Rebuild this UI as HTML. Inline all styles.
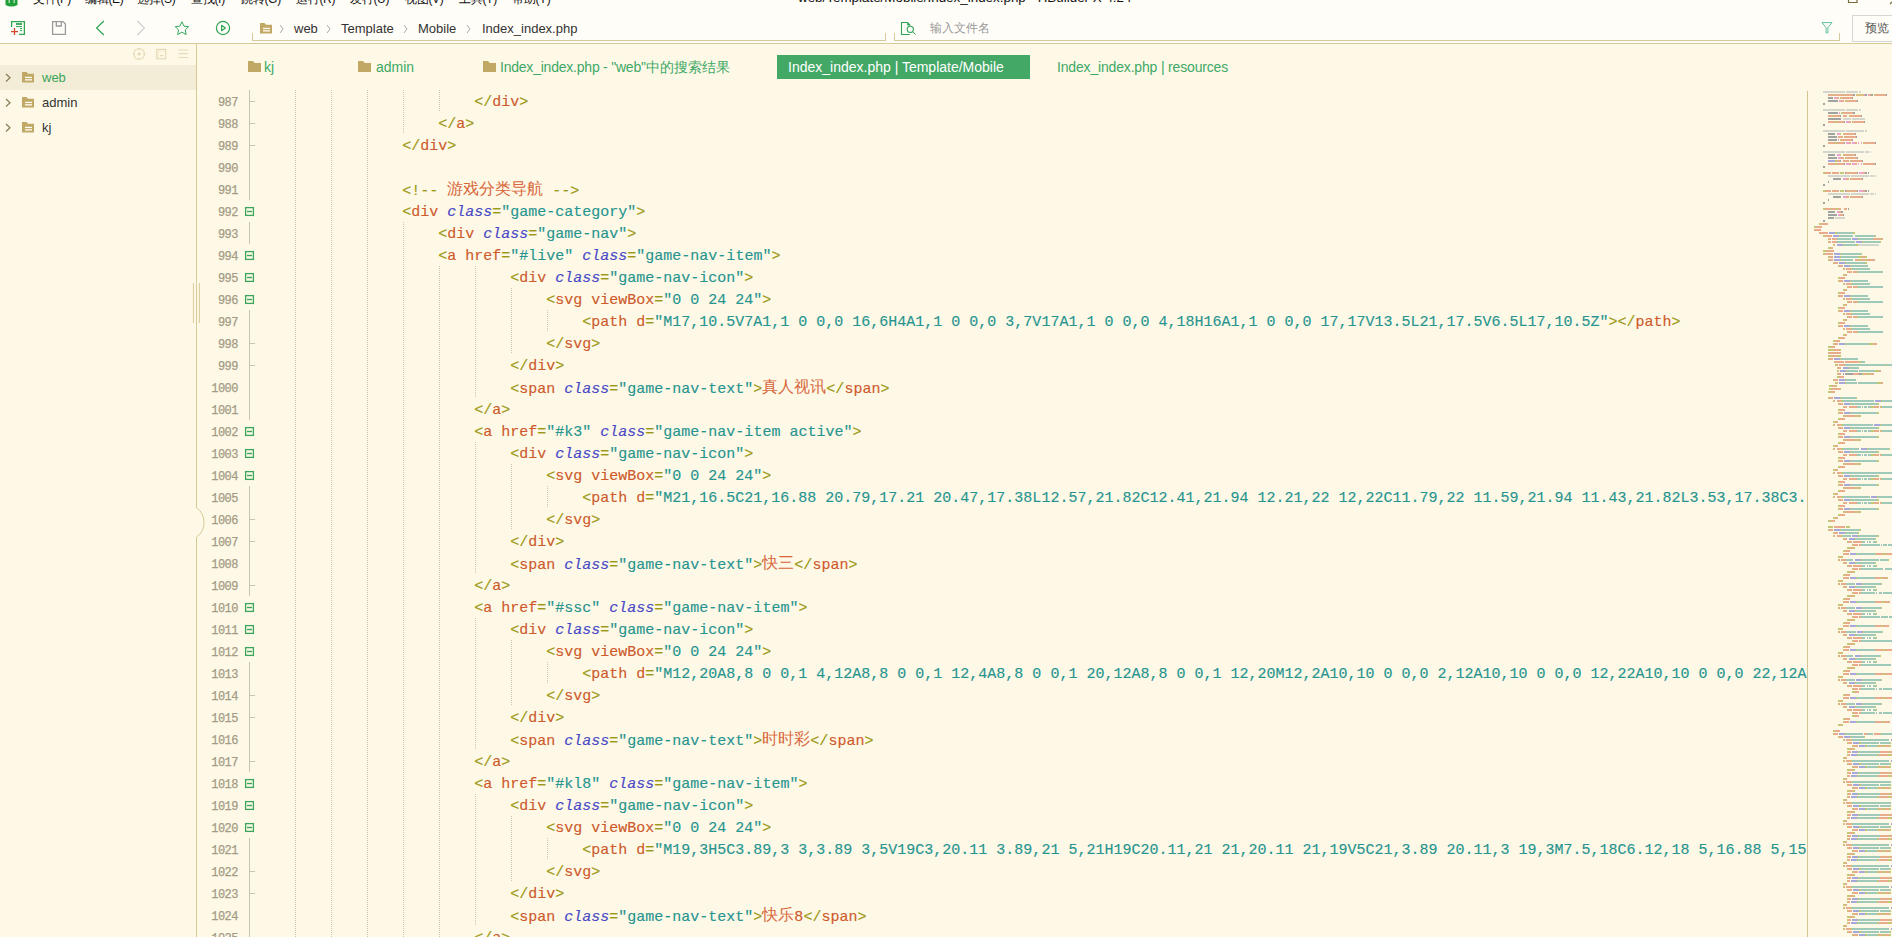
<!DOCTYPE html>
<html><head><meta charset="utf-8"><style>
*{margin:0;padding:0;box-sizing:border-box}
html,body{width:1892px;height:937px;overflow:hidden;background:#FEF9E7;font-family:"Liberation Sans",sans-serif}
.a{position:absolute}
#top{left:0;top:0;width:1892px;height:43px;background:#FFFDF8}
#hb{left:0;top:43px;width:1892px;height:1px;background:#D8C999}
.menu{top:-9px;font-size:12px;letter-spacing:-0.3px;color:#111;white-space:pre;line-height:16px}
.bc{top:20px;font-size:13px;color:#333;white-space:pre;line-height:18px}
.bcs{top:19px;font-size:12px;color:#999;line-height:18px}
#side{left:0;top:44px;width:196px;height:893px;background:#FEF9E7}
#sideb{left:196px;top:44px;width:1px;height:893px;background:#D8C999}
.tree{left:0;width:196px;height:25px}
.tree .t{left:42px;top:3px;font-size:13px;line-height:18px;color:#333;white-space:pre}
.tab{top:58px;font-size:14px;line-height:18px;color:#3FA866;white-space:pre}
.ln{left:200px;width:38px;text-align:right;font-family:"Liberation Mono",monospace;font-size:12px;letter-spacing:-0.5px;padding-top:1.5px;-webkit-text-stroke:0.25px;line-height:22px;color:#A39B84;height:22px}
.code{left:295px;font-family:"Liberation Mono",monospace;font-size:15px;line-height:22px;height:22px;padding-top:2px;white-space:pre;color:#CE5A2C;-webkit-text-stroke:0.15px}
.p{color:#9C9814} .g{color:#CE5A2C} .at{color:#CE5A2C} .c{color:#4848C6;font-style:italic} .s{color:#27948F}
.cj{font-size:15.5px;-webkit-text-stroke:0;color:#D8663A;position:relative;top:-1px}
#clip{left:197px;top:90px;width:1610px;height:847px;overflow:hidden}
#mm{left:1807px;top:90px;width:85px;height:847px;overflow:hidden}
</style></head>
<body>
<div id="top" class="a"></div>
<div id="hb" class="a"></div>
<svg class="a" style="left:4px;top:0" width="16" height="8"><path d="M1.5 0 H13.5 V5 Q7.5 8 1.5 5 Z" fill="#21A03A"/><rect x="4.5" y="0" width="1.5" height="3" fill="#fff" opacity=".6"/><rect x="9.5" y="0" width="1.5" height="3" fill="#fff" opacity=".6"/></svg>
<div class="a menu" style="left:33px">文件(F)</div>
<div class="a menu" style="left:85px">编辑(E)</div>
<div class="a menu" style="left:137px">选择(S)</div>
<div class="a menu" style="left:191px">查找(I)</div>
<div class="a menu" style="left:241px">跳转(G)</div>
<div class="a menu" style="left:296px">运行(R)</div>
<div class="a menu" style="left:350px">发行(U)</div>
<div class="a menu" style="left:405px">视图(V)</div>
<div class="a menu" style="left:459px">工具(T)</div>
<div class="a menu" style="left:512px">帮助(Y)</div>
<div class="a menu" style="left:798px;font-size:13.4px;letter-spacing:0;top:-10px">web/Template/Mobile/Index_index.php - HBuilder X 4.24</div>
<svg class="a" style="left:1846px;top:-1px" width="46" height="6"><path d="M2.5 0 V3.5 H11 V0" fill="none" stroke="#7a6a40" stroke-width="1.2"/><path d="M44 5 L46 3" stroke="#7a6a40" stroke-width="1.2"/></svg>
<svg class="a" style="left:0;top:12px" width="240" height="30" viewBox="0 12 240 30">
<g fill="none" stroke-width="1.3">
 <path d="M11.6 27 V21.6 H24.4 V34.4 H19" stroke="#2EA454"/>
 <path d="M16 24 H22" stroke="#2EA454" stroke-width="1.8"/>
 <path d="M16 26.6 H22" stroke="#2EA454" stroke-width="1"/>
 <path d="M20 28.6 H22 M20 30.6 H22" stroke="#2EA454" stroke-width="1"/>
 <path d="M11 31.6 H18 M14.5 28 V35" stroke="#D9452B" stroke-width="1.3"/>
 <path d="M52.6 21.6 H63 L65.4 24 V34.4 H52.6 Z" stroke="#9a9a9a"/>
 <path d="M56.3 21.6 V26 H61.3 V21.6" stroke="#9a9a9a"/>
 <path d="M103.8 21 L96.6 28 L103.8 35" stroke="#2EA454" stroke-width="1.2"/>
 <path d="M137.2 21 L144.4 28 L137.2 35" stroke="#cfcfcf" stroke-width="1.2"/>
 <path d="M181.9 21.8 L184 26.2 L188.6 26.7 L185.2 29.9 L186.2 34.6 L181.9 32.2 L177.6 34.6 L178.6 29.9 L175.2 26.7 L179.8 26.2 Z" stroke="#34AA5C" stroke-width="1" stroke-linejoin="round"/>
 <circle cx="223" cy="28" r="6.6" stroke="#2EA454" stroke-width="1.2"/>
 <path d="M221.6 25.3 L225.4 28 L221.6 30.7 Z" stroke="#2EA454" stroke-width="1.2" stroke-linejoin="round"/>
</g></svg>
<div class="a" style="left:252px;top:33px;width:1px;height:8px;background:#D8C999"></div>
<div class="a" style="left:252px;top:40px;width:634px;height:1px;background:#D8C999"></div>
<div class="a" style="left:885px;top:33px;width:1px;height:8px;background:#D8C999"></div>
<div class="a" style="left:894px;top:33px;width:1px;height:8px;background:#D8C999"></div>
<div class="a" style="left:894px;top:40px;width:946px;height:1px;background:#D8C999"></div>
<div class="a" style="left:1839px;top:33px;width:1px;height:8px;background:#D8C999"></div>
<svg class="a" style="left:260px;top:23px" width="13" height="11"><path d="M0 0 H4.5 L6 1.8 H12 V10.5 H0 Z" fill="#C2A865"/><rect x="3" y="4.8" width="7" height="1.3" fill="#fffdf5"/><rect x="3" y="7.2" width="7" height="1.3" fill="#fffdf5"/></svg>
<svg class="a" style="left:279px;top:24px" width="6" height="10"><path d="M1 1 L4 5.0 L1 9" fill="none" stroke="#aaa" stroke-width="1"/></svg>
<svg class="a" style="left:326px;top:24px" width="6" height="10"><path d="M1 1 L4 5.0 L1 9" fill="none" stroke="#aaa" stroke-width="1"/></svg>
<svg class="a" style="left:403px;top:24px" width="6" height="10"><path d="M1 1 L4 5.0 L1 9" fill="none" stroke="#aaa" stroke-width="1"/></svg>
<svg class="a" style="left:466px;top:24px" width="6" height="10"><path d="M1 1 L4 5.0 L1 9" fill="none" stroke="#aaa" stroke-width="1"/></svg>
<div class="a bc" style="left:294px">web</div>
<div class="a bc" style="left:341px">Template</div>
<div class="a bc" style="left:418px">Mobile</div>
<div class="a bc" style="left:482px">Index_index.php</div>
<svg class="a" style="left:895px;top:18px" width="26" height="20"><g fill="none" stroke="#2EA454" stroke-width="1.1">
<path d="M14.8 16.5 H6.5 V4.5 H12.5 L15.2 7.1"/><circle cx="15.3" cy="11.3" r="3.1"/><path d="M17.4 13.6 L20.5 16.5" stroke-width="1"/></g>
<path d="M12.2 4.6 L15.6 7.4 H12.2 Z" fill="#2EA454"/></svg>
<div class="a bcs" style="left:930px;color:#9a9a9a">输入文件名</div>
<svg class="a" style="left:1820px;top:21px" width="14" height="14"><path d="M2 1.6 H12 L7.9 6.6 V11.8 L6.1 11.8 V6.6 Z" fill="none" stroke="#4DB89A" stroke-width="0.9" stroke-linejoin="round"/></svg>
<div class="a" style="left:1852px;top:15px;width:50px;height:27px;border:1px solid #d6d6d6;background:#fffdf8"></div>
<div class="a" style="left:1865px;top:19px;font-size:12px;line-height:18px;color:#555">预览</div>
<div id="side" class="a"></div>
<div id="sideb" class="a"></div>
<svg class="a" style="left:130px;top:46px" width="66" height="16"><g fill="none" stroke="#E6DBB8" stroke-width="1.2">
<circle cx="9.1" cy="8" r="5.4"/><path d="M9.1 2.6 V4.2 M9.1 11.8 V13.4 M3.7 8 H5.3 M12.9 8 H14.5"/>
<rect x="26.7" y="3.4" width="9" height="9.4"/><path d="M28.3 12.2 V5 H35" stroke-width="0.8" opacity=".6"/><path d="M30 9.6 H33.4"/>
<path d="M48.5 4 H57.8 M48.5 7.7 H57.8 M48.5 11.5 H57.8"/></g><circle cx="9.1" cy="8" r="1.7" fill="#E6DBB8"/></svg>
<div class="a" style="left:0;top:65px;width:196px;height:25px;background:#F3ECD6"></div>
<svg class="a" style="left:5px;top:73px" width="7" height="9.5"><path d="M1 1 L5 4.75 L1 8.5" fill="none" stroke="#8C7F5C" stroke-width="1.3"/></svg>
<svg class="a" style="left:22px;top:72px" width="13" height="11"><path d="M0 0 H4.5 L6 1.8 H12 V10.5 H0 Z" fill="#C2A865"/><rect x="3" y="4.8" width="7" height="1.3" fill="#fffdf5"/><rect x="3" y="7.2" width="7" height="1.3" fill="#fffdf5"/></svg>
<div class="a" style="left:42px;top:69px;font-size:13px;line-height:18px;color:#3BA55C">web</div>
<svg class="a" style="left:5px;top:98px" width="7" height="9.5"><path d="M1 1 L5 4.75 L1 8.5" fill="none" stroke="#8C7F5C" stroke-width="1.3"/></svg>
<svg class="a" style="left:22px;top:97px" width="13" height="11"><path d="M0 0 H4.5 L6 1.8 H12 V10.5 H0 Z" fill="#C2A865"/><rect x="3" y="4.8" width="7" height="1.3" fill="#fffdf5"/><rect x="3" y="7.2" width="7" height="1.3" fill="#fffdf5"/></svg>
<div class="a" style="left:42px;top:94px;font-size:13px;line-height:18px;color:#333">admin</div>
<svg class="a" style="left:5px;top:123px" width="7" height="9.5"><path d="M1 1 L5 4.75 L1 8.5" fill="none" stroke="#8C7F5C" stroke-width="1.3"/></svg>
<svg class="a" style="left:22px;top:122px" width="13" height="11"><path d="M0 0 H4.5 L6 1.8 H12 V10.5 H0 Z" fill="#C2A865"/><rect x="3" y="4.8" width="7" height="1.3" fill="#fffdf5"/><rect x="3" y="7.2" width="7" height="1.3" fill="#fffdf5"/></svg>
<div class="a" style="left:42px;top:119px;font-size:13px;line-height:18px;color:#333">kj</div>
<svg class="a" style="left:190px;top:270px" width="20" height="280">
<path d="M3.4 13 V53" stroke="#D8C999" stroke-width="1"/><path d="M9.4 13 V53" stroke="#D8C999" stroke-width="1"/>
<rect x="5.5" y="238" width="3" height="29" fill="#FEF9E7"/><path d="M6.5 237.5 Q14 243 14 252.5 Q14 262 6.5 267" fill="none" stroke="#D8C999" stroke-width="1"/></svg>
<svg class="a" style="left:248px;top:61px" width="14" height="12"><path d="M0 0 H5 L6.8 2 H13 V11 H0 Z" fill="#C2A865"/></svg>
<div class="a tab" style="left:264px">kj</div>
<svg class="a" style="left:358px;top:61px" width="14" height="12"><path d="M0 0 H5 L6.8 2 H13 V11 H0 Z" fill="#C2A865"/></svg>
<div class="a tab" style="left:376px">admin</div>
<svg class="a" style="left:483px;top:61px" width="14" height="12"><path d="M0 0 H5 L6.8 2 H13 V11 H0 Z" fill="#C2A865"/></svg>
<div class="a tab" style="left:500px"><span style="letter-spacing:-0.22px">Index_index.php - "web"</span>中的搜索结果</div>
<div class="a" style="left:777px;top:55px;width:253px;height:24px;background:#43A866"></div>
<div class="a tab" style="left:788px;color:#fff">Index_index.php | Template/Mobile</div>
<div class="a tab" style="left:1057px;letter-spacing:-0.17px">Index_index.php | resources</div>
<div id="clip" class="a">
<div class="a" style="left:98px;top:0px;width:1px;height:22px;background:repeating-linear-gradient(to bottom,#CFC6AE 0 1px,transparent 1px 2px)"></div>
<div class="a" style="left:134px;top:0px;width:1px;height:22px;background:repeating-linear-gradient(to bottom,#CFC6AE 0 1px,transparent 1px 2px)"></div>
<div class="a" style="left:170px;top:0px;width:1px;height:22px;background:repeating-linear-gradient(to bottom,#CFC6AE 0 1px,transparent 1px 2px)"></div>
<div class="a" style="left:206px;top:0px;width:1px;height:22px;background:repeating-linear-gradient(to bottom,#CFC6AE 0 1px,transparent 1px 2px)"></div>
<div class="a" style="left:242px;top:0px;width:1px;height:22px;background:repeating-linear-gradient(to bottom,#CFC6AE 0 1px,transparent 1px 2px)"></div>
<div class="a code" style="left:97.19999999999999px;top:0px">                    <span class="p">&lt;/</span><span class="g">div</span><span class="p">&gt;</span></div>
<div class="a" style="left:98px;top:22px;width:1px;height:22px;background:repeating-linear-gradient(to bottom,#CFC6AE 0 1px,transparent 1px 2px)"></div>
<div class="a" style="left:134px;top:22px;width:1px;height:22px;background:repeating-linear-gradient(to bottom,#CFC6AE 0 1px,transparent 1px 2px)"></div>
<div class="a" style="left:170px;top:22px;width:1px;height:22px;background:repeating-linear-gradient(to bottom,#CFC6AE 0 1px,transparent 1px 2px)"></div>
<div class="a" style="left:206px;top:22px;width:1px;height:22px;background:repeating-linear-gradient(to bottom,#CFC6AE 0 1px,transparent 1px 2px)"></div>
<div class="a code" style="left:97.19999999999999px;top:22px">                <span class="p">&lt;/</span><span class="g">a</span><span class="p">&gt;</span></div>
<div class="a" style="left:98px;top:44px;width:1px;height:22px;background:repeating-linear-gradient(to bottom,#CFC6AE 0 1px,transparent 1px 2px)"></div>
<div class="a" style="left:134px;top:44px;width:1px;height:22px;background:repeating-linear-gradient(to bottom,#CFC6AE 0 1px,transparent 1px 2px)"></div>
<div class="a" style="left:170px;top:44px;width:1px;height:22px;background:repeating-linear-gradient(to bottom,#CFC6AE 0 1px,transparent 1px 2px)"></div>
<div class="a code" style="left:97.19999999999999px;top:44px">            <span class="p">&lt;/</span><span class="g">div</span><span class="p">&gt;</span></div>
<div class="a" style="left:98px;top:66px;width:1px;height:22px;background:repeating-linear-gradient(to bottom,#CFC6AE 0 1px,transparent 1px 2px)"></div>
<div class="a" style="left:134px;top:66px;width:1px;height:22px;background:repeating-linear-gradient(to bottom,#CFC6AE 0 1px,transparent 1px 2px)"></div>
<div class="a" style="left:170px;top:66px;width:1px;height:22px;background:repeating-linear-gradient(to bottom,#CFC6AE 0 1px,transparent 1px 2px)"></div>
<div class="a code" style="left:97.19999999999999px;top:66px"></div>
<div class="a" style="left:98px;top:88px;width:1px;height:22px;background:repeating-linear-gradient(to bottom,#CFC6AE 0 1px,transparent 1px 2px)"></div>
<div class="a" style="left:134px;top:88px;width:1px;height:22px;background:repeating-linear-gradient(to bottom,#CFC6AE 0 1px,transparent 1px 2px)"></div>
<div class="a" style="left:170px;top:88px;width:1px;height:22px;background:repeating-linear-gradient(to bottom,#CFC6AE 0 1px,transparent 1px 2px)"></div>
<div class="a code" style="left:97.19999999999999px;top:88px">            <span class="p">&lt;!--</span><span class="g"> <span class="cj">游戏分类导航</span> </span><span class="p">--&gt;</span></div>
<div class="a" style="left:98px;top:110px;width:1px;height:22px;background:repeating-linear-gradient(to bottom,#CFC6AE 0 1px,transparent 1px 2px)"></div>
<div class="a" style="left:134px;top:110px;width:1px;height:22px;background:repeating-linear-gradient(to bottom,#CFC6AE 0 1px,transparent 1px 2px)"></div>
<div class="a" style="left:170px;top:110px;width:1px;height:22px;background:repeating-linear-gradient(to bottom,#CFC6AE 0 1px,transparent 1px 2px)"></div>
<div class="a code" style="left:97.19999999999999px;top:110px">            <span class="p">&lt;</span><span class="g">div</span> <span class="c">class</span><span class="p">=</span><span class="s">"game-category"</span><span class="p">&gt;</span></div>
<div class="a" style="left:98px;top:132px;width:1px;height:22px;background:repeating-linear-gradient(to bottom,#CFC6AE 0 1px,transparent 1px 2px)"></div>
<div class="a" style="left:134px;top:132px;width:1px;height:22px;background:repeating-linear-gradient(to bottom,#CFC6AE 0 1px,transparent 1px 2px)"></div>
<div class="a" style="left:170px;top:132px;width:1px;height:22px;background:repeating-linear-gradient(to bottom,#CFC6AE 0 1px,transparent 1px 2px)"></div>
<div class="a" style="left:206px;top:132px;width:1px;height:22px;background:repeating-linear-gradient(to bottom,#CFC6AE 0 1px,transparent 1px 2px)"></div>
<div class="a code" style="left:97.19999999999999px;top:132px">                <span class="p">&lt;</span><span class="g">div</span> <span class="c">class</span><span class="p">=</span><span class="s">"game-nav"</span><span class="p">&gt;</span></div>
<div class="a" style="left:98px;top:154px;width:1px;height:22px;background:repeating-linear-gradient(to bottom,#CFC6AE 0 1px,transparent 1px 2px)"></div>
<div class="a" style="left:134px;top:154px;width:1px;height:22px;background:repeating-linear-gradient(to bottom,#CFC6AE 0 1px,transparent 1px 2px)"></div>
<div class="a" style="left:170px;top:154px;width:1px;height:22px;background:repeating-linear-gradient(to bottom,#CFC6AE 0 1px,transparent 1px 2px)"></div>
<div class="a" style="left:206px;top:154px;width:1px;height:22px;background:repeating-linear-gradient(to bottom,#CFC6AE 0 1px,transparent 1px 2px)"></div>
<div class="a code" style="left:97.19999999999999px;top:154px">                <span class="p">&lt;</span><span class="g">a</span> <span class="at">href</span><span class="p">=</span><span class="s">"#live"</span> <span class="c">class</span><span class="p">=</span><span class="s">"game-nav-item"</span><span class="p">&gt;</span></div>
<div class="a" style="left:98px;top:176px;width:1px;height:22px;background:repeating-linear-gradient(to bottom,#CFC6AE 0 1px,transparent 1px 2px)"></div>
<div class="a" style="left:134px;top:176px;width:1px;height:22px;background:repeating-linear-gradient(to bottom,#CFC6AE 0 1px,transparent 1px 2px)"></div>
<div class="a" style="left:170px;top:176px;width:1px;height:22px;background:repeating-linear-gradient(to bottom,#CFC6AE 0 1px,transparent 1px 2px)"></div>
<div class="a" style="left:206px;top:176px;width:1px;height:22px;background:repeating-linear-gradient(to bottom,#CFC6AE 0 1px,transparent 1px 2px)"></div>
<div class="a" style="left:242px;top:176px;width:1px;height:22px;background:repeating-linear-gradient(to bottom,#CFC6AE 0 1px,transparent 1px 2px)"></div>
<div class="a" style="left:278px;top:176px;width:1px;height:22px;background:repeating-linear-gradient(to bottom,#CFC6AE 0 1px,transparent 1px 2px)"></div>
<div class="a code" style="left:97.19999999999999px;top:176px">                        <span class="p">&lt;</span><span class="g">div</span> <span class="c">class</span><span class="p">=</span><span class="s">"game-nav-icon"</span><span class="p">&gt;</span></div>
<div class="a" style="left:98px;top:198px;width:1px;height:22px;background:repeating-linear-gradient(to bottom,#CFC6AE 0 1px,transparent 1px 2px)"></div>
<div class="a" style="left:134px;top:198px;width:1px;height:22px;background:repeating-linear-gradient(to bottom,#CFC6AE 0 1px,transparent 1px 2px)"></div>
<div class="a" style="left:170px;top:198px;width:1px;height:22px;background:repeating-linear-gradient(to bottom,#CFC6AE 0 1px,transparent 1px 2px)"></div>
<div class="a" style="left:206px;top:198px;width:1px;height:22px;background:repeating-linear-gradient(to bottom,#CFC6AE 0 1px,transparent 1px 2px)"></div>
<div class="a" style="left:242px;top:198px;width:1px;height:22px;background:repeating-linear-gradient(to bottom,#CFC6AE 0 1px,transparent 1px 2px)"></div>
<div class="a" style="left:278px;top:198px;width:1px;height:22px;background:repeating-linear-gradient(to bottom,#CFC6AE 0 1px,transparent 1px 2px)"></div>
<div class="a" style="left:314px;top:198px;width:1px;height:22px;background:repeating-linear-gradient(to bottom,#CFC6AE 0 1px,transparent 1px 2px)"></div>
<div class="a code" style="left:97.19999999999999px;top:198px">                            <span class="p">&lt;</span><span class="g">svg</span> <span class="at">viewBox</span><span class="p">=</span><span class="s">"0 0 24 24"</span><span class="p">&gt;</span></div>
<div class="a" style="left:98px;top:220px;width:1px;height:22px;background:repeating-linear-gradient(to bottom,#CFC6AE 0 1px,transparent 1px 2px)"></div>
<div class="a" style="left:134px;top:220px;width:1px;height:22px;background:repeating-linear-gradient(to bottom,#CFC6AE 0 1px,transparent 1px 2px)"></div>
<div class="a" style="left:170px;top:220px;width:1px;height:22px;background:repeating-linear-gradient(to bottom,#CFC6AE 0 1px,transparent 1px 2px)"></div>
<div class="a" style="left:206px;top:220px;width:1px;height:22px;background:repeating-linear-gradient(to bottom,#CFC6AE 0 1px,transparent 1px 2px)"></div>
<div class="a" style="left:242px;top:220px;width:1px;height:22px;background:repeating-linear-gradient(to bottom,#CFC6AE 0 1px,transparent 1px 2px)"></div>
<div class="a" style="left:278px;top:220px;width:1px;height:22px;background:repeating-linear-gradient(to bottom,#CFC6AE 0 1px,transparent 1px 2px)"></div>
<div class="a" style="left:314px;top:220px;width:1px;height:22px;background:repeating-linear-gradient(to bottom,#CFC6AE 0 1px,transparent 1px 2px)"></div>
<div class="a" style="left:350px;top:220px;width:1px;height:22px;background:repeating-linear-gradient(to bottom,#CFC6AE 0 1px,transparent 1px 2px)"></div>
<div class="a code" style="left:97.19999999999999px;top:220px">                                <span class="p">&lt;</span><span class="g">path</span> <span class="at">d</span><span class="p">=</span><span class="s">"M17,10.5V7A1,1 0 0,0 16,6H4A1,1 0 0,0 3,7V17A1,1 0 0,0 4,18H16A1,1 0 0,0 17,17V13.5L21,17.5V6.5L17,10.5Z"</span><span class="p">&gt;</span><span class="p">&lt;/</span><span class="g">path</span><span class="p">&gt;</span></div>
<div class="a" style="left:98px;top:242px;width:1px;height:22px;background:repeating-linear-gradient(to bottom,#CFC6AE 0 1px,transparent 1px 2px)"></div>
<div class="a" style="left:134px;top:242px;width:1px;height:22px;background:repeating-linear-gradient(to bottom,#CFC6AE 0 1px,transparent 1px 2px)"></div>
<div class="a" style="left:170px;top:242px;width:1px;height:22px;background:repeating-linear-gradient(to bottom,#CFC6AE 0 1px,transparent 1px 2px)"></div>
<div class="a" style="left:206px;top:242px;width:1px;height:22px;background:repeating-linear-gradient(to bottom,#CFC6AE 0 1px,transparent 1px 2px)"></div>
<div class="a" style="left:242px;top:242px;width:1px;height:22px;background:repeating-linear-gradient(to bottom,#CFC6AE 0 1px,transparent 1px 2px)"></div>
<div class="a" style="left:278px;top:242px;width:1px;height:22px;background:repeating-linear-gradient(to bottom,#CFC6AE 0 1px,transparent 1px 2px)"></div>
<div class="a" style="left:314px;top:242px;width:1px;height:22px;background:repeating-linear-gradient(to bottom,#CFC6AE 0 1px,transparent 1px 2px)"></div>
<div class="a code" style="left:97.19999999999999px;top:242px">                            <span class="p">&lt;/</span><span class="g">svg</span><span class="p">&gt;</span></div>
<div class="a" style="left:98px;top:264px;width:1px;height:22px;background:repeating-linear-gradient(to bottom,#CFC6AE 0 1px,transparent 1px 2px)"></div>
<div class="a" style="left:134px;top:264px;width:1px;height:22px;background:repeating-linear-gradient(to bottom,#CFC6AE 0 1px,transparent 1px 2px)"></div>
<div class="a" style="left:170px;top:264px;width:1px;height:22px;background:repeating-linear-gradient(to bottom,#CFC6AE 0 1px,transparent 1px 2px)"></div>
<div class="a" style="left:206px;top:264px;width:1px;height:22px;background:repeating-linear-gradient(to bottom,#CFC6AE 0 1px,transparent 1px 2px)"></div>
<div class="a" style="left:242px;top:264px;width:1px;height:22px;background:repeating-linear-gradient(to bottom,#CFC6AE 0 1px,transparent 1px 2px)"></div>
<div class="a" style="left:278px;top:264px;width:1px;height:22px;background:repeating-linear-gradient(to bottom,#CFC6AE 0 1px,transparent 1px 2px)"></div>
<div class="a code" style="left:97.19999999999999px;top:264px">                        <span class="p">&lt;/</span><span class="g">div</span><span class="p">&gt;</span></div>
<div class="a" style="left:98px;top:286px;width:1px;height:22px;background:repeating-linear-gradient(to bottom,#CFC6AE 0 1px,transparent 1px 2px)"></div>
<div class="a" style="left:134px;top:286px;width:1px;height:22px;background:repeating-linear-gradient(to bottom,#CFC6AE 0 1px,transparent 1px 2px)"></div>
<div class="a" style="left:170px;top:286px;width:1px;height:22px;background:repeating-linear-gradient(to bottom,#CFC6AE 0 1px,transparent 1px 2px)"></div>
<div class="a" style="left:206px;top:286px;width:1px;height:22px;background:repeating-linear-gradient(to bottom,#CFC6AE 0 1px,transparent 1px 2px)"></div>
<div class="a" style="left:242px;top:286px;width:1px;height:22px;background:repeating-linear-gradient(to bottom,#CFC6AE 0 1px,transparent 1px 2px)"></div>
<div class="a" style="left:278px;top:286px;width:1px;height:22px;background:repeating-linear-gradient(to bottom,#CFC6AE 0 1px,transparent 1px 2px)"></div>
<div class="a code" style="left:97.19999999999999px;top:286px">                        <span class="p">&lt;</span><span class="g">span</span> <span class="c">class</span><span class="p">=</span><span class="s">"game-nav-text"</span><span class="p">&gt;</span><span class="g"><span class="cj">真人视讯</span></span><span class="p">&lt;/</span><span class="g">span</span><span class="p">&gt;</span></div>
<div class="a" style="left:98px;top:308px;width:1px;height:22px;background:repeating-linear-gradient(to bottom,#CFC6AE 0 1px,transparent 1px 2px)"></div>
<div class="a" style="left:134px;top:308px;width:1px;height:22px;background:repeating-linear-gradient(to bottom,#CFC6AE 0 1px,transparent 1px 2px)"></div>
<div class="a" style="left:170px;top:308px;width:1px;height:22px;background:repeating-linear-gradient(to bottom,#CFC6AE 0 1px,transparent 1px 2px)"></div>
<div class="a" style="left:206px;top:308px;width:1px;height:22px;background:repeating-linear-gradient(to bottom,#CFC6AE 0 1px,transparent 1px 2px)"></div>
<div class="a" style="left:242px;top:308px;width:1px;height:22px;background:repeating-linear-gradient(to bottom,#CFC6AE 0 1px,transparent 1px 2px)"></div>
<div class="a code" style="left:97.19999999999999px;top:308px">                    <span class="p">&lt;/</span><span class="g">a</span><span class="p">&gt;</span></div>
<div class="a" style="left:98px;top:330px;width:1px;height:22px;background:repeating-linear-gradient(to bottom,#CFC6AE 0 1px,transparent 1px 2px)"></div>
<div class="a" style="left:134px;top:330px;width:1px;height:22px;background:repeating-linear-gradient(to bottom,#CFC6AE 0 1px,transparent 1px 2px)"></div>
<div class="a" style="left:170px;top:330px;width:1px;height:22px;background:repeating-linear-gradient(to bottom,#CFC6AE 0 1px,transparent 1px 2px)"></div>
<div class="a" style="left:206px;top:330px;width:1px;height:22px;background:repeating-linear-gradient(to bottom,#CFC6AE 0 1px,transparent 1px 2px)"></div>
<div class="a" style="left:242px;top:330px;width:1px;height:22px;background:repeating-linear-gradient(to bottom,#CFC6AE 0 1px,transparent 1px 2px)"></div>
<div class="a code" style="left:97.19999999999999px;top:330px">                    <span class="p">&lt;</span><span class="g">a</span> <span class="at">href</span><span class="p">=</span><span class="s">"#k3"</span> <span class="c">class</span><span class="p">=</span><span class="s">"game-nav-item active"</span><span class="p">&gt;</span></div>
<div class="a" style="left:98px;top:352px;width:1px;height:22px;background:repeating-linear-gradient(to bottom,#CFC6AE 0 1px,transparent 1px 2px)"></div>
<div class="a" style="left:134px;top:352px;width:1px;height:22px;background:repeating-linear-gradient(to bottom,#CFC6AE 0 1px,transparent 1px 2px)"></div>
<div class="a" style="left:170px;top:352px;width:1px;height:22px;background:repeating-linear-gradient(to bottom,#CFC6AE 0 1px,transparent 1px 2px)"></div>
<div class="a" style="left:206px;top:352px;width:1px;height:22px;background:repeating-linear-gradient(to bottom,#CFC6AE 0 1px,transparent 1px 2px)"></div>
<div class="a" style="left:242px;top:352px;width:1px;height:22px;background:repeating-linear-gradient(to bottom,#CFC6AE 0 1px,transparent 1px 2px)"></div>
<div class="a" style="left:278px;top:352px;width:1px;height:22px;background:repeating-linear-gradient(to bottom,#CFC6AE 0 1px,transparent 1px 2px)"></div>
<div class="a code" style="left:97.19999999999999px;top:352px">                        <span class="p">&lt;</span><span class="g">div</span> <span class="c">class</span><span class="p">=</span><span class="s">"game-nav-icon"</span><span class="p">&gt;</span></div>
<div class="a" style="left:98px;top:374px;width:1px;height:22px;background:repeating-linear-gradient(to bottom,#CFC6AE 0 1px,transparent 1px 2px)"></div>
<div class="a" style="left:134px;top:374px;width:1px;height:22px;background:repeating-linear-gradient(to bottom,#CFC6AE 0 1px,transparent 1px 2px)"></div>
<div class="a" style="left:170px;top:374px;width:1px;height:22px;background:repeating-linear-gradient(to bottom,#CFC6AE 0 1px,transparent 1px 2px)"></div>
<div class="a" style="left:206px;top:374px;width:1px;height:22px;background:repeating-linear-gradient(to bottom,#CFC6AE 0 1px,transparent 1px 2px)"></div>
<div class="a" style="left:242px;top:374px;width:1px;height:22px;background:repeating-linear-gradient(to bottom,#CFC6AE 0 1px,transparent 1px 2px)"></div>
<div class="a" style="left:278px;top:374px;width:1px;height:22px;background:repeating-linear-gradient(to bottom,#CFC6AE 0 1px,transparent 1px 2px)"></div>
<div class="a" style="left:314px;top:374px;width:1px;height:22px;background:repeating-linear-gradient(to bottom,#CFC6AE 0 1px,transparent 1px 2px)"></div>
<div class="a code" style="left:97.19999999999999px;top:374px">                            <span class="p">&lt;</span><span class="g">svg</span> <span class="at">viewBox</span><span class="p">=</span><span class="s">"0 0 24 24"</span><span class="p">&gt;</span></div>
<div class="a" style="left:98px;top:396px;width:1px;height:22px;background:repeating-linear-gradient(to bottom,#CFC6AE 0 1px,transparent 1px 2px)"></div>
<div class="a" style="left:134px;top:396px;width:1px;height:22px;background:repeating-linear-gradient(to bottom,#CFC6AE 0 1px,transparent 1px 2px)"></div>
<div class="a" style="left:170px;top:396px;width:1px;height:22px;background:repeating-linear-gradient(to bottom,#CFC6AE 0 1px,transparent 1px 2px)"></div>
<div class="a" style="left:206px;top:396px;width:1px;height:22px;background:repeating-linear-gradient(to bottom,#CFC6AE 0 1px,transparent 1px 2px)"></div>
<div class="a" style="left:242px;top:396px;width:1px;height:22px;background:repeating-linear-gradient(to bottom,#CFC6AE 0 1px,transparent 1px 2px)"></div>
<div class="a" style="left:278px;top:396px;width:1px;height:22px;background:repeating-linear-gradient(to bottom,#CFC6AE 0 1px,transparent 1px 2px)"></div>
<div class="a" style="left:314px;top:396px;width:1px;height:22px;background:repeating-linear-gradient(to bottom,#CFC6AE 0 1px,transparent 1px 2px)"></div>
<div class="a" style="left:350px;top:396px;width:1px;height:22px;background:repeating-linear-gradient(to bottom,#CFC6AE 0 1px,transparent 1px 2px)"></div>
<div class="a code" style="left:97.19999999999999px;top:396px">                                <span class="p">&lt;</span><span class="g">path</span> <span class="at">d</span><span class="p">=</span><span class="s">"M21,16.5C21,16.88 20.79,17.21 20.47,17.38L12.57,21.82C12.41,21.94 12.21,22 12,22C11.79,22 11.59,21.94 11.43,21.82L3.53,17.38C3.21,17.21 3,16.88 3,16.5V7.5"</span><span class="p">&gt;</span><span class="p">&lt;/</span><span class="g">path</span><span class="p">&gt;</span></div>
<div class="a" style="left:98px;top:418px;width:1px;height:22px;background:repeating-linear-gradient(to bottom,#CFC6AE 0 1px,transparent 1px 2px)"></div>
<div class="a" style="left:134px;top:418px;width:1px;height:22px;background:repeating-linear-gradient(to bottom,#CFC6AE 0 1px,transparent 1px 2px)"></div>
<div class="a" style="left:170px;top:418px;width:1px;height:22px;background:repeating-linear-gradient(to bottom,#CFC6AE 0 1px,transparent 1px 2px)"></div>
<div class="a" style="left:206px;top:418px;width:1px;height:22px;background:repeating-linear-gradient(to bottom,#CFC6AE 0 1px,transparent 1px 2px)"></div>
<div class="a" style="left:242px;top:418px;width:1px;height:22px;background:repeating-linear-gradient(to bottom,#CFC6AE 0 1px,transparent 1px 2px)"></div>
<div class="a" style="left:278px;top:418px;width:1px;height:22px;background:repeating-linear-gradient(to bottom,#CFC6AE 0 1px,transparent 1px 2px)"></div>
<div class="a" style="left:314px;top:418px;width:1px;height:22px;background:repeating-linear-gradient(to bottom,#CFC6AE 0 1px,transparent 1px 2px)"></div>
<div class="a code" style="left:97.19999999999999px;top:418px">                            <span class="p">&lt;/</span><span class="g">svg</span><span class="p">&gt;</span></div>
<div class="a" style="left:98px;top:440px;width:1px;height:22px;background:repeating-linear-gradient(to bottom,#CFC6AE 0 1px,transparent 1px 2px)"></div>
<div class="a" style="left:134px;top:440px;width:1px;height:22px;background:repeating-linear-gradient(to bottom,#CFC6AE 0 1px,transparent 1px 2px)"></div>
<div class="a" style="left:170px;top:440px;width:1px;height:22px;background:repeating-linear-gradient(to bottom,#CFC6AE 0 1px,transparent 1px 2px)"></div>
<div class="a" style="left:206px;top:440px;width:1px;height:22px;background:repeating-linear-gradient(to bottom,#CFC6AE 0 1px,transparent 1px 2px)"></div>
<div class="a" style="left:242px;top:440px;width:1px;height:22px;background:repeating-linear-gradient(to bottom,#CFC6AE 0 1px,transparent 1px 2px)"></div>
<div class="a" style="left:278px;top:440px;width:1px;height:22px;background:repeating-linear-gradient(to bottom,#CFC6AE 0 1px,transparent 1px 2px)"></div>
<div class="a code" style="left:97.19999999999999px;top:440px">                        <span class="p">&lt;/</span><span class="g">div</span><span class="p">&gt;</span></div>
<div class="a" style="left:98px;top:462px;width:1px;height:22px;background:repeating-linear-gradient(to bottom,#CFC6AE 0 1px,transparent 1px 2px)"></div>
<div class="a" style="left:134px;top:462px;width:1px;height:22px;background:repeating-linear-gradient(to bottom,#CFC6AE 0 1px,transparent 1px 2px)"></div>
<div class="a" style="left:170px;top:462px;width:1px;height:22px;background:repeating-linear-gradient(to bottom,#CFC6AE 0 1px,transparent 1px 2px)"></div>
<div class="a" style="left:206px;top:462px;width:1px;height:22px;background:repeating-linear-gradient(to bottom,#CFC6AE 0 1px,transparent 1px 2px)"></div>
<div class="a" style="left:242px;top:462px;width:1px;height:22px;background:repeating-linear-gradient(to bottom,#CFC6AE 0 1px,transparent 1px 2px)"></div>
<div class="a" style="left:278px;top:462px;width:1px;height:22px;background:repeating-linear-gradient(to bottom,#CFC6AE 0 1px,transparent 1px 2px)"></div>
<div class="a code" style="left:97.19999999999999px;top:462px">                        <span class="p">&lt;</span><span class="g">span</span> <span class="c">class</span><span class="p">=</span><span class="s">"game-nav-text"</span><span class="p">&gt;</span><span class="g"><span class="cj">快三</span></span><span class="p">&lt;/</span><span class="g">span</span><span class="p">&gt;</span></div>
<div class="a" style="left:98px;top:484px;width:1px;height:22px;background:repeating-linear-gradient(to bottom,#CFC6AE 0 1px,transparent 1px 2px)"></div>
<div class="a" style="left:134px;top:484px;width:1px;height:22px;background:repeating-linear-gradient(to bottom,#CFC6AE 0 1px,transparent 1px 2px)"></div>
<div class="a" style="left:170px;top:484px;width:1px;height:22px;background:repeating-linear-gradient(to bottom,#CFC6AE 0 1px,transparent 1px 2px)"></div>
<div class="a" style="left:206px;top:484px;width:1px;height:22px;background:repeating-linear-gradient(to bottom,#CFC6AE 0 1px,transparent 1px 2px)"></div>
<div class="a" style="left:242px;top:484px;width:1px;height:22px;background:repeating-linear-gradient(to bottom,#CFC6AE 0 1px,transparent 1px 2px)"></div>
<div class="a code" style="left:97.19999999999999px;top:484px">                    <span class="p">&lt;/</span><span class="g">a</span><span class="p">&gt;</span></div>
<div class="a" style="left:98px;top:506px;width:1px;height:22px;background:repeating-linear-gradient(to bottom,#CFC6AE 0 1px,transparent 1px 2px)"></div>
<div class="a" style="left:134px;top:506px;width:1px;height:22px;background:repeating-linear-gradient(to bottom,#CFC6AE 0 1px,transparent 1px 2px)"></div>
<div class="a" style="left:170px;top:506px;width:1px;height:22px;background:repeating-linear-gradient(to bottom,#CFC6AE 0 1px,transparent 1px 2px)"></div>
<div class="a" style="left:206px;top:506px;width:1px;height:22px;background:repeating-linear-gradient(to bottom,#CFC6AE 0 1px,transparent 1px 2px)"></div>
<div class="a" style="left:242px;top:506px;width:1px;height:22px;background:repeating-linear-gradient(to bottom,#CFC6AE 0 1px,transparent 1px 2px)"></div>
<div class="a code" style="left:97.19999999999999px;top:506px">                    <span class="p">&lt;</span><span class="g">a</span> <span class="at">href</span><span class="p">=</span><span class="s">"#ssc"</span> <span class="c">class</span><span class="p">=</span><span class="s">"game-nav-item"</span><span class="p">&gt;</span></div>
<div class="a" style="left:98px;top:528px;width:1px;height:22px;background:repeating-linear-gradient(to bottom,#CFC6AE 0 1px,transparent 1px 2px)"></div>
<div class="a" style="left:134px;top:528px;width:1px;height:22px;background:repeating-linear-gradient(to bottom,#CFC6AE 0 1px,transparent 1px 2px)"></div>
<div class="a" style="left:170px;top:528px;width:1px;height:22px;background:repeating-linear-gradient(to bottom,#CFC6AE 0 1px,transparent 1px 2px)"></div>
<div class="a" style="left:206px;top:528px;width:1px;height:22px;background:repeating-linear-gradient(to bottom,#CFC6AE 0 1px,transparent 1px 2px)"></div>
<div class="a" style="left:242px;top:528px;width:1px;height:22px;background:repeating-linear-gradient(to bottom,#CFC6AE 0 1px,transparent 1px 2px)"></div>
<div class="a" style="left:278px;top:528px;width:1px;height:22px;background:repeating-linear-gradient(to bottom,#CFC6AE 0 1px,transparent 1px 2px)"></div>
<div class="a code" style="left:97.19999999999999px;top:528px">                        <span class="p">&lt;</span><span class="g">div</span> <span class="c">class</span><span class="p">=</span><span class="s">"game-nav-icon"</span><span class="p">&gt;</span></div>
<div class="a" style="left:98px;top:550px;width:1px;height:22px;background:repeating-linear-gradient(to bottom,#CFC6AE 0 1px,transparent 1px 2px)"></div>
<div class="a" style="left:134px;top:550px;width:1px;height:22px;background:repeating-linear-gradient(to bottom,#CFC6AE 0 1px,transparent 1px 2px)"></div>
<div class="a" style="left:170px;top:550px;width:1px;height:22px;background:repeating-linear-gradient(to bottom,#CFC6AE 0 1px,transparent 1px 2px)"></div>
<div class="a" style="left:206px;top:550px;width:1px;height:22px;background:repeating-linear-gradient(to bottom,#CFC6AE 0 1px,transparent 1px 2px)"></div>
<div class="a" style="left:242px;top:550px;width:1px;height:22px;background:repeating-linear-gradient(to bottom,#CFC6AE 0 1px,transparent 1px 2px)"></div>
<div class="a" style="left:278px;top:550px;width:1px;height:22px;background:repeating-linear-gradient(to bottom,#CFC6AE 0 1px,transparent 1px 2px)"></div>
<div class="a" style="left:314px;top:550px;width:1px;height:22px;background:repeating-linear-gradient(to bottom,#CFC6AE 0 1px,transparent 1px 2px)"></div>
<div class="a code" style="left:97.19999999999999px;top:550px">                            <span class="p">&lt;</span><span class="g">svg</span> <span class="at">viewBox</span><span class="p">=</span><span class="s">"0 0 24 24"</span><span class="p">&gt;</span></div>
<div class="a" style="left:98px;top:572px;width:1px;height:22px;background:repeating-linear-gradient(to bottom,#CFC6AE 0 1px,transparent 1px 2px)"></div>
<div class="a" style="left:134px;top:572px;width:1px;height:22px;background:repeating-linear-gradient(to bottom,#CFC6AE 0 1px,transparent 1px 2px)"></div>
<div class="a" style="left:170px;top:572px;width:1px;height:22px;background:repeating-linear-gradient(to bottom,#CFC6AE 0 1px,transparent 1px 2px)"></div>
<div class="a" style="left:206px;top:572px;width:1px;height:22px;background:repeating-linear-gradient(to bottom,#CFC6AE 0 1px,transparent 1px 2px)"></div>
<div class="a" style="left:242px;top:572px;width:1px;height:22px;background:repeating-linear-gradient(to bottom,#CFC6AE 0 1px,transparent 1px 2px)"></div>
<div class="a" style="left:278px;top:572px;width:1px;height:22px;background:repeating-linear-gradient(to bottom,#CFC6AE 0 1px,transparent 1px 2px)"></div>
<div class="a" style="left:314px;top:572px;width:1px;height:22px;background:repeating-linear-gradient(to bottom,#CFC6AE 0 1px,transparent 1px 2px)"></div>
<div class="a" style="left:350px;top:572px;width:1px;height:22px;background:repeating-linear-gradient(to bottom,#CFC6AE 0 1px,transparent 1px 2px)"></div>
<div class="a code" style="left:97.19999999999999px;top:572px">                                <span class="p">&lt;</span><span class="g">path</span> <span class="at">d</span><span class="p">=</span><span class="s">"M12,20A8,8 0 0,1 4,12A8,8 0 0,1 12,4A8,8 0 0,1 20,12A8,8 0 0,1 12,20M12,2A10,10 0 0,0 2,12A10,10 0 0,0 12,22A10,10 0 0,0 22,12A10,10"</span><span class="p">&gt;</span><span class="p">&lt;/</span><span class="g">path</span><span class="p">&gt;</span></div>
<div class="a" style="left:98px;top:594px;width:1px;height:22px;background:repeating-linear-gradient(to bottom,#CFC6AE 0 1px,transparent 1px 2px)"></div>
<div class="a" style="left:134px;top:594px;width:1px;height:22px;background:repeating-linear-gradient(to bottom,#CFC6AE 0 1px,transparent 1px 2px)"></div>
<div class="a" style="left:170px;top:594px;width:1px;height:22px;background:repeating-linear-gradient(to bottom,#CFC6AE 0 1px,transparent 1px 2px)"></div>
<div class="a" style="left:206px;top:594px;width:1px;height:22px;background:repeating-linear-gradient(to bottom,#CFC6AE 0 1px,transparent 1px 2px)"></div>
<div class="a" style="left:242px;top:594px;width:1px;height:22px;background:repeating-linear-gradient(to bottom,#CFC6AE 0 1px,transparent 1px 2px)"></div>
<div class="a" style="left:278px;top:594px;width:1px;height:22px;background:repeating-linear-gradient(to bottom,#CFC6AE 0 1px,transparent 1px 2px)"></div>
<div class="a" style="left:314px;top:594px;width:1px;height:22px;background:repeating-linear-gradient(to bottom,#CFC6AE 0 1px,transparent 1px 2px)"></div>
<div class="a code" style="left:97.19999999999999px;top:594px">                            <span class="p">&lt;/</span><span class="g">svg</span><span class="p">&gt;</span></div>
<div class="a" style="left:98px;top:616px;width:1px;height:22px;background:repeating-linear-gradient(to bottom,#CFC6AE 0 1px,transparent 1px 2px)"></div>
<div class="a" style="left:134px;top:616px;width:1px;height:22px;background:repeating-linear-gradient(to bottom,#CFC6AE 0 1px,transparent 1px 2px)"></div>
<div class="a" style="left:170px;top:616px;width:1px;height:22px;background:repeating-linear-gradient(to bottom,#CFC6AE 0 1px,transparent 1px 2px)"></div>
<div class="a" style="left:206px;top:616px;width:1px;height:22px;background:repeating-linear-gradient(to bottom,#CFC6AE 0 1px,transparent 1px 2px)"></div>
<div class="a" style="left:242px;top:616px;width:1px;height:22px;background:repeating-linear-gradient(to bottom,#CFC6AE 0 1px,transparent 1px 2px)"></div>
<div class="a" style="left:278px;top:616px;width:1px;height:22px;background:repeating-linear-gradient(to bottom,#CFC6AE 0 1px,transparent 1px 2px)"></div>
<div class="a code" style="left:97.19999999999999px;top:616px">                        <span class="p">&lt;/</span><span class="g">div</span><span class="p">&gt;</span></div>
<div class="a" style="left:98px;top:638px;width:1px;height:22px;background:repeating-linear-gradient(to bottom,#CFC6AE 0 1px,transparent 1px 2px)"></div>
<div class="a" style="left:134px;top:638px;width:1px;height:22px;background:repeating-linear-gradient(to bottom,#CFC6AE 0 1px,transparent 1px 2px)"></div>
<div class="a" style="left:170px;top:638px;width:1px;height:22px;background:repeating-linear-gradient(to bottom,#CFC6AE 0 1px,transparent 1px 2px)"></div>
<div class="a" style="left:206px;top:638px;width:1px;height:22px;background:repeating-linear-gradient(to bottom,#CFC6AE 0 1px,transparent 1px 2px)"></div>
<div class="a" style="left:242px;top:638px;width:1px;height:22px;background:repeating-linear-gradient(to bottom,#CFC6AE 0 1px,transparent 1px 2px)"></div>
<div class="a" style="left:278px;top:638px;width:1px;height:22px;background:repeating-linear-gradient(to bottom,#CFC6AE 0 1px,transparent 1px 2px)"></div>
<div class="a code" style="left:97.19999999999999px;top:638px">                        <span class="p">&lt;</span><span class="g">span</span> <span class="c">class</span><span class="p">=</span><span class="s">"game-nav-text"</span><span class="p">&gt;</span><span class="g"><span class="cj">时时彩</span></span><span class="p">&lt;/</span><span class="g">span</span><span class="p">&gt;</span></div>
<div class="a" style="left:98px;top:660px;width:1px;height:22px;background:repeating-linear-gradient(to bottom,#CFC6AE 0 1px,transparent 1px 2px)"></div>
<div class="a" style="left:134px;top:660px;width:1px;height:22px;background:repeating-linear-gradient(to bottom,#CFC6AE 0 1px,transparent 1px 2px)"></div>
<div class="a" style="left:170px;top:660px;width:1px;height:22px;background:repeating-linear-gradient(to bottom,#CFC6AE 0 1px,transparent 1px 2px)"></div>
<div class="a" style="left:206px;top:660px;width:1px;height:22px;background:repeating-linear-gradient(to bottom,#CFC6AE 0 1px,transparent 1px 2px)"></div>
<div class="a" style="left:242px;top:660px;width:1px;height:22px;background:repeating-linear-gradient(to bottom,#CFC6AE 0 1px,transparent 1px 2px)"></div>
<div class="a code" style="left:97.19999999999999px;top:660px">                    <span class="p">&lt;/</span><span class="g">a</span><span class="p">&gt;</span></div>
<div class="a" style="left:98px;top:682px;width:1px;height:22px;background:repeating-linear-gradient(to bottom,#CFC6AE 0 1px,transparent 1px 2px)"></div>
<div class="a" style="left:134px;top:682px;width:1px;height:22px;background:repeating-linear-gradient(to bottom,#CFC6AE 0 1px,transparent 1px 2px)"></div>
<div class="a" style="left:170px;top:682px;width:1px;height:22px;background:repeating-linear-gradient(to bottom,#CFC6AE 0 1px,transparent 1px 2px)"></div>
<div class="a" style="left:206px;top:682px;width:1px;height:22px;background:repeating-linear-gradient(to bottom,#CFC6AE 0 1px,transparent 1px 2px)"></div>
<div class="a" style="left:242px;top:682px;width:1px;height:22px;background:repeating-linear-gradient(to bottom,#CFC6AE 0 1px,transparent 1px 2px)"></div>
<div class="a code" style="left:97.19999999999999px;top:682px">                    <span class="p">&lt;</span><span class="g">a</span> <span class="at">href</span><span class="p">=</span><span class="s">"#kl8"</span> <span class="c">class</span><span class="p">=</span><span class="s">"game-nav-item"</span><span class="p">&gt;</span></div>
<div class="a" style="left:98px;top:704px;width:1px;height:22px;background:repeating-linear-gradient(to bottom,#CFC6AE 0 1px,transparent 1px 2px)"></div>
<div class="a" style="left:134px;top:704px;width:1px;height:22px;background:repeating-linear-gradient(to bottom,#CFC6AE 0 1px,transparent 1px 2px)"></div>
<div class="a" style="left:170px;top:704px;width:1px;height:22px;background:repeating-linear-gradient(to bottom,#CFC6AE 0 1px,transparent 1px 2px)"></div>
<div class="a" style="left:206px;top:704px;width:1px;height:22px;background:repeating-linear-gradient(to bottom,#CFC6AE 0 1px,transparent 1px 2px)"></div>
<div class="a" style="left:242px;top:704px;width:1px;height:22px;background:repeating-linear-gradient(to bottom,#CFC6AE 0 1px,transparent 1px 2px)"></div>
<div class="a" style="left:278px;top:704px;width:1px;height:22px;background:repeating-linear-gradient(to bottom,#CFC6AE 0 1px,transparent 1px 2px)"></div>
<div class="a code" style="left:97.19999999999999px;top:704px">                        <span class="p">&lt;</span><span class="g">div</span> <span class="c">class</span><span class="p">=</span><span class="s">"game-nav-icon"</span><span class="p">&gt;</span></div>
<div class="a" style="left:98px;top:726px;width:1px;height:22px;background:repeating-linear-gradient(to bottom,#CFC6AE 0 1px,transparent 1px 2px)"></div>
<div class="a" style="left:134px;top:726px;width:1px;height:22px;background:repeating-linear-gradient(to bottom,#CFC6AE 0 1px,transparent 1px 2px)"></div>
<div class="a" style="left:170px;top:726px;width:1px;height:22px;background:repeating-linear-gradient(to bottom,#CFC6AE 0 1px,transparent 1px 2px)"></div>
<div class="a" style="left:206px;top:726px;width:1px;height:22px;background:repeating-linear-gradient(to bottom,#CFC6AE 0 1px,transparent 1px 2px)"></div>
<div class="a" style="left:242px;top:726px;width:1px;height:22px;background:repeating-linear-gradient(to bottom,#CFC6AE 0 1px,transparent 1px 2px)"></div>
<div class="a" style="left:278px;top:726px;width:1px;height:22px;background:repeating-linear-gradient(to bottom,#CFC6AE 0 1px,transparent 1px 2px)"></div>
<div class="a" style="left:314px;top:726px;width:1px;height:22px;background:repeating-linear-gradient(to bottom,#CFC6AE 0 1px,transparent 1px 2px)"></div>
<div class="a code" style="left:97.19999999999999px;top:726px">                            <span class="p">&lt;</span><span class="g">svg</span> <span class="at">viewBox</span><span class="p">=</span><span class="s">"0 0 24 24"</span><span class="p">&gt;</span></div>
<div class="a" style="left:98px;top:748px;width:1px;height:22px;background:repeating-linear-gradient(to bottom,#CFC6AE 0 1px,transparent 1px 2px)"></div>
<div class="a" style="left:134px;top:748px;width:1px;height:22px;background:repeating-linear-gradient(to bottom,#CFC6AE 0 1px,transparent 1px 2px)"></div>
<div class="a" style="left:170px;top:748px;width:1px;height:22px;background:repeating-linear-gradient(to bottom,#CFC6AE 0 1px,transparent 1px 2px)"></div>
<div class="a" style="left:206px;top:748px;width:1px;height:22px;background:repeating-linear-gradient(to bottom,#CFC6AE 0 1px,transparent 1px 2px)"></div>
<div class="a" style="left:242px;top:748px;width:1px;height:22px;background:repeating-linear-gradient(to bottom,#CFC6AE 0 1px,transparent 1px 2px)"></div>
<div class="a" style="left:278px;top:748px;width:1px;height:22px;background:repeating-linear-gradient(to bottom,#CFC6AE 0 1px,transparent 1px 2px)"></div>
<div class="a" style="left:314px;top:748px;width:1px;height:22px;background:repeating-linear-gradient(to bottom,#CFC6AE 0 1px,transparent 1px 2px)"></div>
<div class="a" style="left:350px;top:748px;width:1px;height:22px;background:repeating-linear-gradient(to bottom,#CFC6AE 0 1px,transparent 1px 2px)"></div>
<div class="a code" style="left:97.19999999999999px;top:748px">                                <span class="p">&lt;</span><span class="g">path</span> <span class="at">d</span><span class="p">=</span><span class="s">"M19,3H5C3.89,3 3,3.89 3,5V19C3,20.11 3.89,21 5,21H19C20.11,21 21,20.11 21,19V5C21,3.89 20.11,3 19,3M7.5,18C6.12,18 5,16.88 5,15.5"</span><span class="p">&gt;</span><span class="p">&lt;/</span><span class="g">path</span><span class="p">&gt;</span></div>
<div class="a" style="left:98px;top:770px;width:1px;height:22px;background:repeating-linear-gradient(to bottom,#CFC6AE 0 1px,transparent 1px 2px)"></div>
<div class="a" style="left:134px;top:770px;width:1px;height:22px;background:repeating-linear-gradient(to bottom,#CFC6AE 0 1px,transparent 1px 2px)"></div>
<div class="a" style="left:170px;top:770px;width:1px;height:22px;background:repeating-linear-gradient(to bottom,#CFC6AE 0 1px,transparent 1px 2px)"></div>
<div class="a" style="left:206px;top:770px;width:1px;height:22px;background:repeating-linear-gradient(to bottom,#CFC6AE 0 1px,transparent 1px 2px)"></div>
<div class="a" style="left:242px;top:770px;width:1px;height:22px;background:repeating-linear-gradient(to bottom,#CFC6AE 0 1px,transparent 1px 2px)"></div>
<div class="a" style="left:278px;top:770px;width:1px;height:22px;background:repeating-linear-gradient(to bottom,#CFC6AE 0 1px,transparent 1px 2px)"></div>
<div class="a" style="left:314px;top:770px;width:1px;height:22px;background:repeating-linear-gradient(to bottom,#CFC6AE 0 1px,transparent 1px 2px)"></div>
<div class="a code" style="left:97.19999999999999px;top:770px">                            <span class="p">&lt;/</span><span class="g">svg</span><span class="p">&gt;</span></div>
<div class="a" style="left:98px;top:792px;width:1px;height:22px;background:repeating-linear-gradient(to bottom,#CFC6AE 0 1px,transparent 1px 2px)"></div>
<div class="a" style="left:134px;top:792px;width:1px;height:22px;background:repeating-linear-gradient(to bottom,#CFC6AE 0 1px,transparent 1px 2px)"></div>
<div class="a" style="left:170px;top:792px;width:1px;height:22px;background:repeating-linear-gradient(to bottom,#CFC6AE 0 1px,transparent 1px 2px)"></div>
<div class="a" style="left:206px;top:792px;width:1px;height:22px;background:repeating-linear-gradient(to bottom,#CFC6AE 0 1px,transparent 1px 2px)"></div>
<div class="a" style="left:242px;top:792px;width:1px;height:22px;background:repeating-linear-gradient(to bottom,#CFC6AE 0 1px,transparent 1px 2px)"></div>
<div class="a" style="left:278px;top:792px;width:1px;height:22px;background:repeating-linear-gradient(to bottom,#CFC6AE 0 1px,transparent 1px 2px)"></div>
<div class="a code" style="left:97.19999999999999px;top:792px">                        <span class="p">&lt;/</span><span class="g">div</span><span class="p">&gt;</span></div>
<div class="a" style="left:98px;top:814px;width:1px;height:22px;background:repeating-linear-gradient(to bottom,#CFC6AE 0 1px,transparent 1px 2px)"></div>
<div class="a" style="left:134px;top:814px;width:1px;height:22px;background:repeating-linear-gradient(to bottom,#CFC6AE 0 1px,transparent 1px 2px)"></div>
<div class="a" style="left:170px;top:814px;width:1px;height:22px;background:repeating-linear-gradient(to bottom,#CFC6AE 0 1px,transparent 1px 2px)"></div>
<div class="a" style="left:206px;top:814px;width:1px;height:22px;background:repeating-linear-gradient(to bottom,#CFC6AE 0 1px,transparent 1px 2px)"></div>
<div class="a" style="left:242px;top:814px;width:1px;height:22px;background:repeating-linear-gradient(to bottom,#CFC6AE 0 1px,transparent 1px 2px)"></div>
<div class="a" style="left:278px;top:814px;width:1px;height:22px;background:repeating-linear-gradient(to bottom,#CFC6AE 0 1px,transparent 1px 2px)"></div>
<div class="a code" style="left:97.19999999999999px;top:814px">                        <span class="p">&lt;</span><span class="g">span</span> <span class="c">class</span><span class="p">=</span><span class="s">"game-nav-text"</span><span class="p">&gt;</span><span class="g"><span class="cj">快乐</span>8</span><span class="p">&lt;/</span><span class="g">span</span><span class="p">&gt;</span></div>
<div class="a" style="left:98px;top:836px;width:1px;height:22px;background:repeating-linear-gradient(to bottom,#CFC6AE 0 1px,transparent 1px 2px)"></div>
<div class="a" style="left:134px;top:836px;width:1px;height:22px;background:repeating-linear-gradient(to bottom,#CFC6AE 0 1px,transparent 1px 2px)"></div>
<div class="a" style="left:170px;top:836px;width:1px;height:22px;background:repeating-linear-gradient(to bottom,#CFC6AE 0 1px,transparent 1px 2px)"></div>
<div class="a" style="left:206px;top:836px;width:1px;height:22px;background:repeating-linear-gradient(to bottom,#CFC6AE 0 1px,transparent 1px 2px)"></div>
<div class="a" style="left:242px;top:836px;width:1px;height:22px;background:repeating-linear-gradient(to bottom,#CFC6AE 0 1px,transparent 1px 2px)"></div>
<div class="a code" style="left:97.19999999999999px;top:836px">                    <span class="p">&lt;/</span><span class="g">a</span><span class="p">&gt;</span></div>
</div>
<div class="a ln" style="top:90px">987</div>
<div class="a ln" style="top:112px">988</div>
<div class="a ln" style="top:134px">989</div>
<div class="a ln" style="top:156px">990</div>
<div class="a ln" style="top:178px">991</div>
<div class="a ln" style="top:200px">992</div>
<div class="a ln" style="top:222px">993</div>
<div class="a ln" style="top:244px">994</div>
<div class="a ln" style="top:266px">995</div>
<div class="a ln" style="top:288px">996</div>
<div class="a ln" style="top:310px">997</div>
<div class="a ln" style="top:332px">998</div>
<div class="a ln" style="top:354px">999</div>
<div class="a ln" style="top:376px">1000</div>
<div class="a ln" style="top:398px">1001</div>
<div class="a ln" style="top:420px">1002</div>
<div class="a ln" style="top:442px">1003</div>
<div class="a ln" style="top:464px">1004</div>
<div class="a ln" style="top:486px">1005</div>
<div class="a ln" style="top:508px">1006</div>
<div class="a ln" style="top:530px">1007</div>
<div class="a ln" style="top:552px">1008</div>
<div class="a ln" style="top:574px">1009</div>
<div class="a ln" style="top:596px">1010</div>
<div class="a ln" style="top:618px">1011</div>
<div class="a ln" style="top:640px">1012</div>
<div class="a ln" style="top:662px">1013</div>
<div class="a ln" style="top:684px">1014</div>
<div class="a ln" style="top:706px">1015</div>
<div class="a ln" style="top:728px">1016</div>
<div class="a ln" style="top:750px">1017</div>
<div class="a ln" style="top:772px">1018</div>
<div class="a ln" style="top:794px">1019</div>
<div class="a ln" style="top:816px">1020</div>
<div class="a ln" style="top:838px">1021</div>
<div class="a ln" style="top:860px">1022</div>
<div class="a ln" style="top:882px">1023</div>
<div class="a ln" style="top:904px">1024</div>
<div class="a ln" style="top:926px">1025</div>
<svg class="a" style="left:240px;top:90px" width="20" height="847"><path d="M9.5 0 V22" stroke="#C9C5B5" stroke-width="1"/><path d="M10 11.5 H15" stroke="#C9C5B5" stroke-width="1"/><path d="M9.5 22 V44" stroke="#C9C5B5" stroke-width="1"/><path d="M10 33.5 H15" stroke="#C9C5B5" stroke-width="1"/><path d="M9.5 44 V66" stroke="#C9C5B5" stroke-width="1"/><path d="M10 55.5 H15" stroke="#C9C5B5" stroke-width="1"/><path d="M9.5 66 V88" stroke="#C9C5B5" stroke-width="1"/><path d="M9.5 88 V110" stroke="#C9C5B5" stroke-width="1"/><rect x="5.6" y="117.6" width="7.8" height="7.8" fill="none" stroke="#3BA55C" stroke-width="1.3"/><path d="M7 121.5 H12" stroke="#3BA55C" stroke-width="1.4"/><path d="M9.5 132 V154" stroke="#C9C5B5" stroke-width="1"/><rect x="5.6" y="161.6" width="7.8" height="7.8" fill="none" stroke="#3BA55C" stroke-width="1.3"/><path d="M7 165.5 H12" stroke="#3BA55C" stroke-width="1.4"/><rect x="5.6" y="183.6" width="7.8" height="7.8" fill="none" stroke="#3BA55C" stroke-width="1.3"/><path d="M7 187.5 H12" stroke="#3BA55C" stroke-width="1.4"/><rect x="5.6" y="205.6" width="7.8" height="7.8" fill="none" stroke="#3BA55C" stroke-width="1.3"/><path d="M7 209.5 H12" stroke="#3BA55C" stroke-width="1.4"/><path d="M9.5 220 V242" stroke="#C9C5B5" stroke-width="1"/><path d="M9.5 242 V264" stroke="#C9C5B5" stroke-width="1"/><path d="M10 253.5 H15" stroke="#C9C5B5" stroke-width="1"/><path d="M9.5 264 V286" stroke="#C9C5B5" stroke-width="1"/><path d="M10 275.5 H15" stroke="#C9C5B5" stroke-width="1"/><path d="M9.5 286 V308" stroke="#C9C5B5" stroke-width="1"/><path d="M9.5 308 V330" stroke="#C9C5B5" stroke-width="1"/><rect x="5.6" y="337.6" width="7.8" height="7.8" fill="none" stroke="#3BA55C" stroke-width="1.3"/><path d="M7 341.5 H12" stroke="#3BA55C" stroke-width="1.4"/><rect x="5.6" y="359.6" width="7.8" height="7.8" fill="none" stroke="#3BA55C" stroke-width="1.3"/><path d="M7 363.5 H12" stroke="#3BA55C" stroke-width="1.4"/><rect x="5.6" y="381.6" width="7.8" height="7.8" fill="none" stroke="#3BA55C" stroke-width="1.3"/><path d="M7 385.5 H12" stroke="#3BA55C" stroke-width="1.4"/><path d="M9.5 396 V418" stroke="#C9C5B5" stroke-width="1"/><path d="M9.5 418 V440" stroke="#C9C5B5" stroke-width="1"/><path d="M10 429.5 H15" stroke="#C9C5B5" stroke-width="1"/><path d="M9.5 440 V462" stroke="#C9C5B5" stroke-width="1"/><path d="M10 451.5 H15" stroke="#C9C5B5" stroke-width="1"/><path d="M9.5 462 V484" stroke="#C9C5B5" stroke-width="1"/><path d="M9.5 484 V506" stroke="#C9C5B5" stroke-width="1"/><path d="M10 495.5 H15" stroke="#C9C5B5" stroke-width="1"/><rect x="5.6" y="513.6" width="7.8" height="7.8" fill="none" stroke="#3BA55C" stroke-width="1.3"/><path d="M7 517.5 H12" stroke="#3BA55C" stroke-width="1.4"/><rect x="5.6" y="535.6" width="7.8" height="7.8" fill="none" stroke="#3BA55C" stroke-width="1.3"/><path d="M7 539.5 H12" stroke="#3BA55C" stroke-width="1.4"/><rect x="5.6" y="557.6" width="7.8" height="7.8" fill="none" stroke="#3BA55C" stroke-width="1.3"/><path d="M7 561.5 H12" stroke="#3BA55C" stroke-width="1.4"/><path d="M9.5 572 V594" stroke="#C9C5B5" stroke-width="1"/><path d="M9.5 594 V616" stroke="#C9C5B5" stroke-width="1"/><path d="M10 605.5 H15" stroke="#C9C5B5" stroke-width="1"/><path d="M9.5 616 V638" stroke="#C9C5B5" stroke-width="1"/><path d="M10 627.5 H15" stroke="#C9C5B5" stroke-width="1"/><path d="M9.5 638 V660" stroke="#C9C5B5" stroke-width="1"/><path d="M9.5 660 V682" stroke="#C9C5B5" stroke-width="1"/><path d="M10 671.5 H15" stroke="#C9C5B5" stroke-width="1"/><rect x="5.6" y="689.6" width="7.8" height="7.8" fill="none" stroke="#3BA55C" stroke-width="1.3"/><path d="M7 693.5 H12" stroke="#3BA55C" stroke-width="1.4"/><rect x="5.6" y="711.6" width="7.8" height="7.8" fill="none" stroke="#3BA55C" stroke-width="1.3"/><path d="M7 715.5 H12" stroke="#3BA55C" stroke-width="1.4"/><rect x="5.6" y="733.6" width="7.8" height="7.8" fill="none" stroke="#3BA55C" stroke-width="1.3"/><path d="M7 737.5 H12" stroke="#3BA55C" stroke-width="1.4"/><path d="M9.5 748 V770" stroke="#C9C5B5" stroke-width="1"/><path d="M9.5 770 V792" stroke="#C9C5B5" stroke-width="1"/><path d="M10 781.5 H15" stroke="#C9C5B5" stroke-width="1"/><path d="M9.5 792 V814" stroke="#C9C5B5" stroke-width="1"/><path d="M10 803.5 H15" stroke="#C9C5B5" stroke-width="1"/><path d="M9.5 814 V836" stroke="#C9C5B5" stroke-width="1"/><path d="M9.5 836 V858" stroke="#C9C5B5" stroke-width="1"/></svg>
<div class="a" style="left:1807px;top:91px;width:1px;height:846px;background:#D5C595"></div>
<svg class="a" style="left:1807px;top:0" width="85" height="937"><rect x="16" y="91" width="22" height="2" fill="#D3D6CC"/><rect x="39" y="91" width="12" height="2" fill="#D3D6CC"/><rect x="52" y="91" width="2" height="2" fill="#D3D6CC"/><rect x="21" y="94" width="25" height="2" fill="#E8AC8C"/><rect x="26" y="94" width="1" height="2" fill="#C2C874"/><rect x="37" y="94" width="1" height="2" fill="#C2C874"/><rect x="46" y="94" width="2" height="2" fill="#A0A3A0"/><rect x="49" y="94" width="8" height="2" fill="#DCC07E"/><rect x="57" y="94" width="3" height="2" fill="#A0A3A0"/><rect x="57" y="94" width="1" height="2" fill="#EBA2D0"/><rect x="61" y="94" width="1" height="2" fill="#EBA2D0"/><rect x="62" y="94" width="2" height="2" fill="#E8AC8C"/><rect x="64" y="94" width="2" height="2" fill="#A0A3A0"/><rect x="67" y="94" width="1" height="2" fill="#C2C874"/><rect x="68" y="94" width="11" height="2" fill="#E8AC8C"/><rect x="79" y="94" width="1" height="2" fill="#A0A3A0"/><rect x="21" y="97" width="5" height="2" fill="#A0A3A0"/><rect x="27" y="97" width="3" height="2" fill="#EBA2D0"/><rect x="30" y="97" width="2" height="2" fill="#E8AC8C"/><rect x="33" y="97" width="1" height="2" fill="#C2C874"/><rect x="34" y="97" width="11" height="2" fill="#E8AC8C"/><rect x="45" y="97" width="1" height="2" fill="#A0A3A0"/><rect x="21" y="100" width="10" height="2" fill="#A0A3A0"/><rect x="32" y="100" width="2" height="2" fill="#EBA2D0"/><rect x="34" y="100" width="3" height="2" fill="#E8AC8C"/><rect x="38" y="100" width="1" height="2" fill="#C2C874"/><rect x="39" y="100" width="11" height="2" fill="#E8AC8C"/><rect x="50" y="100" width="1" height="2" fill="#A0A3A0"/><rect x="16" y="103" width="2" height="2" fill="#A0A3A0"/><rect x="16" y="109" width="22" height="2" fill="#D3D6CC"/><rect x="39" y="109" width="12" height="2" fill="#D3D6CC"/><rect x="52" y="109" width="2" height="2" fill="#D3D6CC"/><rect x="21" y="112" width="10" height="2" fill="#A0A3A0"/><rect x="32" y="112" width="1" height="2" fill="#EBA2D0"/><rect x="34" y="112" width="2" height="2" fill="#C2C874"/><rect x="36" y="112" width="10" height="2" fill="#E8AC8C"/><rect x="46" y="112" width="2" height="2" fill="#A0A3A0"/><rect x="21" y="115" width="4" height="2" fill="#E8AC8C"/><rect x="25" y="115" width="1" height="2" fill="#C2C874"/><rect x="26" y="115" width="7" height="2" fill="#E8AC8C"/><rect x="33" y="115" width="1" height="2" fill="#A0A3A0"/><rect x="36" y="115" width="4" height="2" fill="#E8AC8C"/><rect x="42" y="115" width="1" height="2" fill="#C2C874"/><rect x="43" y="115" width="11" height="2" fill="#E8AC8C"/><rect x="54" y="115" width="1" height="2" fill="#A0A3A0"/><rect x="21" y="118" width="13" height="2" fill="#A0A3A0"/><rect x="36" y="118" width="8" height="2" fill="#D3D6CC"/><rect x="45" y="118" width="13" height="2" fill="#D3D6CC"/><rect x="21" y="121" width="7" height="2" fill="#E8AC8C"/><rect x="28" y="121" width="2" height="2" fill="#C2C874"/><rect x="30" y="121" width="7" height="2" fill="#E8AC8C"/><rect x="37" y="121" width="1" height="2" fill="#A0A3A0"/><rect x="39" y="121" width="3" height="2" fill="#EBA2D0"/><rect x="42" y="121" width="2" height="2" fill="#E8AC8C"/><rect x="45" y="121" width="1" height="2" fill="#C2C874"/><rect x="46" y="121" width="11" height="2" fill="#E8AC8C"/><rect x="57" y="121" width="1" height="2" fill="#A0A3A0"/><rect x="16" y="124" width="2" height="2" fill="#A0A3A0"/><rect x="16" y="130" width="22" height="2" fill="#D3D6CC"/><rect x="39" y="130" width="18" height="2" fill="#D3D6CC"/><rect x="58" y="130" width="2" height="2" fill="#D3D6CC"/><rect x="21" y="133" width="7" height="2" fill="#A0A3A0"/><rect x="30" y="133" width="3" height="2" fill="#EBA2D0"/><rect x="33" y="133" width="1" height="2" fill="#C2C874"/><rect x="36" y="133" width="1" height="2" fill="#C2C874"/><rect x="37" y="133" width="11" height="2" fill="#E8AC8C"/><rect x="48" y="133" width="1" height="2" fill="#A0A3A0"/><rect x="21" y="136" width="9" height="2" fill="#A0A3A0"/><rect x="31" y="136" width="5" height="2" fill="#E8AC8C"/><rect x="37" y="136" width="1" height="2" fill="#C2C874"/><rect x="38" y="136" width="11" height="2" fill="#E8AC8C"/><rect x="49" y="136" width="1" height="2" fill="#A0A3A0"/><rect x="21" y="139" width="9" height="2" fill="#A0A3A0"/><rect x="31" y="139" width="1" height="2" fill="#EBA2D0"/><rect x="33" y="139" width="1" height="2" fill="#C2C874"/><rect x="34" y="139" width="11" height="2" fill="#E8AC8C"/><rect x="45" y="139" width="1" height="2" fill="#A0A3A0"/><rect x="21" y="142" width="7" height="2" fill="#E8AC8C"/><rect x="28" y="142" width="2" height="2" fill="#C2C874"/><rect x="30" y="142" width="7" height="2" fill="#E8AC8C"/><rect x="37" y="142" width="1" height="2" fill="#A0A3A0"/><rect x="39" y="142" width="3" height="2" fill="#EBA2D0"/><rect x="42" y="142" width="2" height="2" fill="#E8AC8C"/><rect x="45" y="142" width="3" height="2" fill="#EBA2D0"/><rect x="48" y="142" width="2" height="2" fill="#E8AC8C"/><rect x="51" y="142" width="1" height="2" fill="#EBA2D0"/><rect x="54" y="142" width="1" height="2" fill="#EBA2D0"/><rect x="56" y="142" width="1" height="2" fill="#C2C874"/><rect x="57" y="142" width="11" height="2" fill="#E8AC8C"/><rect x="68" y="142" width="1" height="2" fill="#A0A3A0"/><rect x="16" y="145" width="2" height="2" fill="#A0A3A0"/><rect x="16" y="151" width="22" height="2" fill="#D3D6CC"/><rect x="39" y="151" width="18" height="2" fill="#D3D6CC"/><rect x="58" y="151" width="4" height="2" fill="#D3D6CC"/><rect x="63" y="151" width="1" height="2" fill="#D3D6CC"/><rect x="21" y="154" width="7" height="2" fill="#A0A3A0"/><rect x="30" y="154" width="3" height="2" fill="#EBA2D0"/><rect x="33" y="154" width="1" height="2" fill="#C2C874"/><rect x="36" y="154" width="1" height="2" fill="#C2C874"/><rect x="37" y="154" width="11" height="2" fill="#E8AC8C"/><rect x="48" y="154" width="1" height="2" fill="#A0A3A0"/><rect x="21" y="157" width="9" height="2" fill="#A0A3A0"/><rect x="31" y="157" width="3" height="2" fill="#EBA2D0"/><rect x="34" y="157" width="3" height="2" fill="#E8AC8C"/><rect x="38" y="157" width="1" height="2" fill="#C2C874"/><rect x="39" y="157" width="11" height="2" fill="#E8AC8C"/><rect x="50" y="157" width="1" height="2" fill="#A0A3A0"/><rect x="21" y="160" width="7" height="2" fill="#A6A8DC"/><rect x="28" y="160" width="2" height="2" fill="#C2C874"/><rect x="30" y="160" width="3" height="2" fill="#E8AC8C"/><rect x="33" y="160" width="1" height="2" fill="#A0A3A0"/><rect x="36" y="160" width="6" height="2" fill="#E8AC8C"/><rect x="43" y="160" width="1" height="2" fill="#C2C874"/><rect x="44" y="160" width="11" height="2" fill="#E8AC8C"/><rect x="55" y="160" width="1" height="2" fill="#A0A3A0"/><rect x="21" y="163" width="7" height="2" fill="#E8AC8C"/><rect x="28" y="163" width="2" height="2" fill="#C2C874"/><rect x="30" y="163" width="7" height="2" fill="#E8AC8C"/><rect x="37" y="163" width="1" height="2" fill="#A0A3A0"/><rect x="39" y="163" width="3" height="2" fill="#EBA2D0"/><rect x="42" y="163" width="2" height="2" fill="#E8AC8C"/><rect x="45" y="163" width="3" height="2" fill="#EBA2D0"/><rect x="48" y="163" width="2" height="2" fill="#E8AC8C"/><rect x="51" y="163" width="1" height="2" fill="#EBA2D0"/><rect x="54" y="163" width="1" height="2" fill="#EBA2D0"/><rect x="56" y="163" width="1" height="2" fill="#C2C874"/><rect x="57" y="163" width="11" height="2" fill="#E8AC8C"/><rect x="68" y="163" width="1" height="2" fill="#A0A3A0"/><rect x="16" y="166" width="2" height="2" fill="#A0A3A0"/><rect x="16" y="172" width="2" height="2" fill="#C2C874"/><rect x="18" y="172" width="6" height="2" fill="#E8AC8C"/><rect x="25" y="172" width="7" height="2" fill="#E8AC8C"/><rect x="33" y="172" width="4" height="2" fill="#C2C874"/><rect x="38" y="172" width="1" height="2" fill="#A0A3A0"/><rect x="39" y="172" width="4" height="2" fill="#E8AC8C"/><rect x="43" y="172" width="1" height="2" fill="#C2C874"/><rect x="44" y="172" width="6" height="2" fill="#E8AC8C"/><rect x="50" y="172" width="1" height="2" fill="#A0A3A0"/><rect x="52" y="172" width="4" height="2" fill="#EBA2D0"/><rect x="56" y="172" width="2" height="2" fill="#E8AC8C"/><rect x="58" y="172" width="2" height="2" fill="#A0A3A0"/><rect x="61" y="172" width="1" height="2" fill="#A0A3A0"/><rect x="21" y="175" width="22" height="2" fill="#D3D6CC"/><rect x="44" y="175" width="18" height="2" fill="#D3D6CC"/><rect x="63" y="175" width="4" height="2" fill="#D3D6CC"/><rect x="68" y="175" width="1" height="2" fill="#D3D6CC"/><rect x="26" y="178" width="8" height="2" fill="#A0A3A0"/><rect x="36" y="178" width="3" height="2" fill="#EBA2D0"/><rect x="39" y="178" width="3" height="2" fill="#E8AC8C"/><rect x="43" y="178" width="1" height="2" fill="#C2C874"/><rect x="44" y="178" width="11" height="2" fill="#E8AC8C"/><rect x="55" y="178" width="1" height="2" fill="#A0A3A0"/><rect x="21" y="181" width="1" height="2" fill="#A0A3A0"/><rect x="16" y="184" width="2" height="2" fill="#A0A3A0"/><rect x="16" y="190" width="2" height="2" fill="#C2C874"/><rect x="18" y="190" width="6" height="2" fill="#E8AC8C"/><rect x="25" y="190" width="7" height="2" fill="#E8AC8C"/><rect x="33" y="190" width="4" height="2" fill="#C2C874"/><rect x="38" y="190" width="1" height="2" fill="#A0A3A0"/><rect x="39" y="190" width="4" height="2" fill="#E8AC8C"/><rect x="43" y="190" width="1" height="2" fill="#C2C874"/><rect x="44" y="190" width="6" height="2" fill="#E8AC8C"/><rect x="50" y="190" width="1" height="2" fill="#A0A3A0"/><rect x="52" y="190" width="4" height="2" fill="#EBA2D0"/><rect x="56" y="190" width="2" height="2" fill="#E8AC8C"/><rect x="58" y="190" width="2" height="2" fill="#A0A3A0"/><rect x="61" y="190" width="1" height="2" fill="#A0A3A0"/><rect x="21" y="193" width="22" height="2" fill="#D3D6CC"/><rect x="44" y="193" width="18" height="2" fill="#D3D6CC"/><rect x="63" y="193" width="4" height="2" fill="#D3D6CC"/><rect x="68" y="193" width="1" height="2" fill="#D3D6CC"/><rect x="26" y="196" width="8" height="2" fill="#A0A3A0"/><rect x="36" y="196" width="3" height="2" fill="#EBA2D0"/><rect x="39" y="196" width="3" height="2" fill="#E8AC8C"/><rect x="43" y="196" width="1" height="2" fill="#C2C874"/><rect x="44" y="196" width="11" height="2" fill="#E8AC8C"/><rect x="55" y="196" width="1" height="2" fill="#A0A3A0"/><rect x="21" y="199" width="1" height="2" fill="#A0A3A0"/><rect x="16" y="202" width="2" height="2" fill="#A0A3A0"/><rect x="16" y="208" width="2" height="2" fill="#C2C874"/><rect x="18" y="208" width="6" height="2" fill="#E8AC8C"/><rect x="24" y="208" width="1" height="2" fill="#C2C874"/><rect x="25" y="208" width="4" height="2" fill="#E8AC8C"/><rect x="29" y="208" width="2" height="2" fill="#C2C874"/><rect x="31" y="208" width="3" height="2" fill="#E8AC8C"/><rect x="37" y="208" width="3" height="2" fill="#E8AC8C"/><rect x="41" y="208" width="1" height="2" fill="#A0A3A0"/><rect x="21" y="211" width="7" height="2" fill="#A0A3A0"/><rect x="30" y="211" width="2" height="2" fill="#EBA2D0"/><rect x="32" y="211" width="2" height="2" fill="#E8AC8C"/><rect x="34" y="211" width="2" height="2" fill="#A0A3A0"/><rect x="21" y="214" width="9" height="2" fill="#A0A3A0"/><rect x="31" y="214" width="2" height="2" fill="#EBA2D0"/><rect x="33" y="214" width="3" height="2" fill="#E8AC8C"/><rect x="36" y="214" width="1" height="2" fill="#A0A3A0"/><rect x="21" y="217" width="6" height="2" fill="#A0A3A0"/><rect x="28" y="217" width="10" height="2" fill="#D3D6CC"/><rect x="16" y="220" width="2" height="2" fill="#A0A3A0"/><rect x="12" y="223" width="2" height="2" fill="#C2C874"/><rect x="14" y="223" width="7" height="2" fill="#E8AC8C"/><rect x="7" y="226" width="2" height="2" fill="#C2C874"/><rect x="9" y="226" width="6" height="2" fill="#E8AC8C"/><rect x="7" y="229" width="7" height="2" fill="#E8AC8C"/><rect x="12" y="232" width="9" height="2" fill="#E8AC8C"/><rect x="22" y="232" width="6" height="2" fill="#A6A8DC"/><rect x="28" y="232" width="2" height="2" fill="#C2C874"/><rect x="30" y="232" width="16" height="2" fill="#9FC9B8"/><rect x="46" y="232" width="2" height="2" fill="#C2C874"/><rect x="16" y="235" width="2" height="2" fill="#C2C874"/><rect x="18" y="235" width="7" height="2" fill="#E8AC8C"/><rect x="26" y="235" width="6" height="2" fill="#A6A8DC"/><rect x="32" y="235" width="1" height="2" fill="#C2C874"/><rect x="33" y="235" width="13" height="2" fill="#9FC9B8"/><rect x="48" y="235" width="20" height="2" fill="#9FC9B8"/><rect x="68" y="235" width="1" height="2" fill="#C2C874"/><rect x="21" y="238" width="1" height="2" fill="#C2C874"/><rect x="22" y="238" width="2" height="2" fill="#E8AC8C"/><rect x="25" y="238" width="5" height="2" fill="#E8AC8C"/><rect x="30" y="238" width="14" height="2" fill="#9FC9B8"/><rect x="45" y="238" width="6" height="2" fill="#A6A8DC"/><rect x="51" y="238" width="1" height="2" fill="#C2C874"/><rect x="52" y="238" width="14" height="2" fill="#9FC9B8"/><rect x="66" y="238" width="7" height="2" fill="#E8AC8C"/><rect x="73" y="238" width="1" height="2" fill="#C2C874"/><rect x="74" y="238" width="2" height="2" fill="#E8AC8C"/><rect x="21" y="241" width="1" height="2" fill="#C2C874"/><rect x="22" y="241" width="2" height="2" fill="#E8AC8C"/><rect x="25" y="241" width="5" height="2" fill="#E8AC8C"/><rect x="30" y="241" width="18" height="2" fill="#9FC9B8"/><rect x="49" y="241" width="6" height="2" fill="#A6A8DC"/><rect x="55" y="241" width="1" height="2" fill="#C2C874"/><rect x="56" y="241" width="17" height="2" fill="#9FC9B8"/><rect x="73" y="241" width="1" height="2" fill="#C2C874"/><rect x="26" y="244" width="1" height="2" fill="#C2C874"/><rect x="27" y="244" width="1" height="2" fill="#E8AC8C"/><rect x="30" y="244" width="6" height="2" fill="#A6A8DC"/><rect x="36" y="244" width="1" height="2" fill="#C2C874"/><rect x="37" y="244" width="12" height="2" fill="#9FC9B8"/><rect x="49" y="244" width="2" height="2" fill="#C2C874"/><rect x="51" y="244" width="21" height="2" fill="#D3D6CC"/><rect x="21" y="247" width="3" height="2" fill="#C2C874"/><rect x="24" y="247" width="2" height="2" fill="#E8AC8C"/><rect x="16" y="250" width="3" height="2" fill="#C2C874"/><rect x="19" y="250" width="8" height="2" fill="#E8AC8C"/><rect x="16" y="253" width="2" height="2" fill="#C2C874"/><rect x="18" y="253" width="8" height="2" fill="#E8AC8C"/><rect x="27" y="253" width="6" height="2" fill="#A6A8DC"/><rect x="33" y="253" width="1" height="2" fill="#C2C874"/><rect x="34" y="253" width="20" height="2" fill="#9FC9B8"/><rect x="54" y="253" width="1" height="2" fill="#C2C874"/><rect x="21" y="256" width="1" height="2" fill="#C2C874"/><rect x="22" y="256" width="4" height="2" fill="#E8AC8C"/><rect x="27" y="256" width="6" height="2" fill="#A6A8DC"/><rect x="33" y="256" width="1" height="2" fill="#C2C874"/><rect x="34" y="256" width="17" height="2" fill="#9FC9B8"/><rect x="51" y="256" width="4" height="2" fill="#C2C874"/><rect x="55" y="256" width="3" height="2" fill="#E8AC8C"/><rect x="58" y="256" width="2" height="2" fill="#C2C874"/><rect x="21" y="259" width="1" height="2" fill="#C2C874"/><rect x="22" y="259" width="4" height="2" fill="#E8AC8C"/><rect x="27" y="259" width="6" height="2" fill="#A6A8DC"/><rect x="33" y="259" width="1" height="2" fill="#C2C874"/><rect x="34" y="259" width="12" height="2" fill="#9FC9B8"/><rect x="48" y="259" width="4" height="2" fill="#E8AC8C"/><rect x="52" y="259" width="2" height="2" fill="#C2C874"/><rect x="54" y="259" width="4" height="2" fill="#E8AC8C"/><rect x="58" y="259" width="2" height="2" fill="#C2C874"/><rect x="60" y="259" width="8" height="2" fill="#E8AC8C"/><rect x="26" y="262" width="1" height="2" fill="#C2C874"/><rect x="27" y="262" width="4" height="2" fill="#E8AC8C"/><rect x="32" y="262" width="6" height="2" fill="#A6A8DC"/><rect x="38" y="262" width="1" height="2" fill="#C2C874"/><rect x="39" y="262" width="19" height="2" fill="#9FC9B8"/><rect x="58" y="262" width="2" height="2" fill="#C2C874"/><rect x="31" y="265" width="1" height="2" fill="#C2C874"/><rect x="32" y="265" width="4" height="2" fill="#E8AC8C"/><rect x="37" y="265" width="6" height="2" fill="#A6A8DC"/><rect x="43" y="265" width="1" height="2" fill="#C2C874"/><rect x="44" y="265" width="17" height="2" fill="#9FC9B8"/><rect x="36" y="268" width="1" height="2" fill="#C2C874"/><rect x="37" y="268" width="1" height="2" fill="#E8AC8C"/><rect x="39" y="268" width="5" height="2" fill="#E8AC8C"/><rect x="44" y="268" width="1" height="2" fill="#C2C874"/><rect x="45" y="268" width="18" height="2" fill="#9FC9B8"/><rect x="40" y="271" width="1" height="2" fill="#C2C874"/><rect x="41" y="271" width="4" height="2" fill="#E8AC8C"/><rect x="46" y="271" width="4" height="2" fill="#E8AC8C"/><rect x="50" y="271" width="1" height="2" fill="#C2C874"/><rect x="51" y="271" width="25" height="2" fill="#9FC9B8"/><rect x="36" y="274" width="2" height="2" fill="#C2C874"/><rect x="38" y="274" width="2" height="2" fill="#E8AC8C"/><rect x="31" y="277" width="2" height="2" fill="#C2C874"/><rect x="33" y="277" width="5" height="2" fill="#E8AC8C"/><rect x="31" y="280" width="1" height="2" fill="#C2C874"/><rect x="32" y="280" width="4" height="2" fill="#E8AC8C"/><rect x="37" y="280" width="6" height="2" fill="#A6A8DC"/><rect x="43" y="280" width="1" height="2" fill="#C2C874"/><rect x="44" y="280" width="17" height="2" fill="#9FC9B8"/><rect x="36" y="283" width="1" height="2" fill="#C2C874"/><rect x="37" y="283" width="1" height="2" fill="#E8AC8C"/><rect x="39" y="283" width="5" height="2" fill="#E8AC8C"/><rect x="44" y="283" width="1" height="2" fill="#C2C874"/><rect x="45" y="283" width="18" height="2" fill="#9FC9B8"/><rect x="40" y="286" width="1" height="2" fill="#C2C874"/><rect x="41" y="286" width="4" height="2" fill="#E8AC8C"/><rect x="46" y="286" width="4" height="2" fill="#E8AC8C"/><rect x="50" y="286" width="1" height="2" fill="#C2C874"/><rect x="51" y="286" width="25" height="2" fill="#9FC9B8"/><rect x="36" y="289" width="2" height="2" fill="#C2C874"/><rect x="38" y="289" width="2" height="2" fill="#E8AC8C"/><rect x="31" y="292" width="2" height="2" fill="#C2C874"/><rect x="33" y="292" width="5" height="2" fill="#E8AC8C"/><rect x="31" y="295" width="1" height="2" fill="#C2C874"/><rect x="32" y="295" width="4" height="2" fill="#E8AC8C"/><rect x="37" y="295" width="6" height="2" fill="#A6A8DC"/><rect x="43" y="295" width="1" height="2" fill="#C2C874"/><rect x="44" y="295" width="17" height="2" fill="#9FC9B8"/><rect x="36" y="298" width="1" height="2" fill="#C2C874"/><rect x="37" y="298" width="1" height="2" fill="#E8AC8C"/><rect x="39" y="298" width="5" height="2" fill="#E8AC8C"/><rect x="44" y="298" width="1" height="2" fill="#C2C874"/><rect x="45" y="298" width="18" height="2" fill="#9FC9B8"/><rect x="40" y="301" width="1" height="2" fill="#C2C874"/><rect x="41" y="301" width="4" height="2" fill="#E8AC8C"/><rect x="46" y="301" width="4" height="2" fill="#E8AC8C"/><rect x="50" y="301" width="1" height="2" fill="#C2C874"/><rect x="51" y="301" width="25" height="2" fill="#9FC9B8"/><rect x="36" y="304" width="2" height="2" fill="#C2C874"/><rect x="38" y="304" width="2" height="2" fill="#E8AC8C"/><rect x="31" y="307" width="2" height="2" fill="#C2C874"/><rect x="33" y="307" width="5" height="2" fill="#E8AC8C"/><rect x="31" y="310" width="1" height="2" fill="#C2C874"/><rect x="32" y="310" width="4" height="2" fill="#E8AC8C"/><rect x="37" y="310" width="6" height="2" fill="#A6A8DC"/><rect x="43" y="310" width="1" height="2" fill="#C2C874"/><rect x="44" y="310" width="17" height="2" fill="#9FC9B8"/><rect x="36" y="313" width="1" height="2" fill="#C2C874"/><rect x="37" y="313" width="1" height="2" fill="#E8AC8C"/><rect x="39" y="313" width="5" height="2" fill="#E8AC8C"/><rect x="44" y="313" width="1" height="2" fill="#C2C874"/><rect x="45" y="313" width="18" height="2" fill="#9FC9B8"/><rect x="40" y="316" width="1" height="2" fill="#C2C874"/><rect x="41" y="316" width="4" height="2" fill="#E8AC8C"/><rect x="46" y="316" width="4" height="2" fill="#E8AC8C"/><rect x="50" y="316" width="1" height="2" fill="#C2C874"/><rect x="51" y="316" width="25" height="2" fill="#9FC9B8"/><rect x="36" y="319" width="2" height="2" fill="#C2C874"/><rect x="38" y="319" width="2" height="2" fill="#E8AC8C"/><rect x="31" y="322" width="2" height="2" fill="#C2C874"/><rect x="33" y="322" width="5" height="2" fill="#E8AC8C"/><rect x="31" y="325" width="1" height="2" fill="#C2C874"/><rect x="32" y="325" width="4" height="2" fill="#E8AC8C"/><rect x="37" y="325" width="6" height="2" fill="#A6A8DC"/><rect x="43" y="325" width="1" height="2" fill="#C2C874"/><rect x="44" y="325" width="17" height="2" fill="#9FC9B8"/><rect x="36" y="328" width="1" height="2" fill="#C2C874"/><rect x="37" y="328" width="1" height="2" fill="#E8AC8C"/><rect x="39" y="328" width="5" height="2" fill="#E8AC8C"/><rect x="44" y="328" width="1" height="2" fill="#C2C874"/><rect x="45" y="328" width="18" height="2" fill="#9FC9B8"/><rect x="40" y="331" width="1" height="2" fill="#C2C874"/><rect x="41" y="331" width="4" height="2" fill="#E8AC8C"/><rect x="46" y="331" width="4" height="2" fill="#E8AC8C"/><rect x="50" y="331" width="1" height="2" fill="#C2C874"/><rect x="51" y="331" width="25" height="2" fill="#9FC9B8"/><rect x="36" y="334" width="2" height="2" fill="#C2C874"/><rect x="38" y="334" width="2" height="2" fill="#E8AC8C"/><rect x="31" y="337" width="2" height="2" fill="#C2C874"/><rect x="33" y="337" width="5" height="2" fill="#E8AC8C"/><rect x="26" y="340" width="2" height="2" fill="#C2C874"/><rect x="28" y="340" width="5" height="2" fill="#E8AC8C"/><rect x="26" y="343" width="1" height="2" fill="#C2C874"/><rect x="27" y="343" width="4" height="2" fill="#E8AC8C"/><rect x="32" y="343" width="6" height="2" fill="#A6A8DC"/><rect x="38" y="343" width="1" height="2" fill="#C2C874"/><rect x="39" y="343" width="23" height="2" fill="#9FC9B8"/><rect x="62" y="343" width="4" height="2" fill="#C2C874"/><rect x="66" y="343" width="4" height="2" fill="#E8AC8C"/><rect x="21" y="346" width="3" height="2" fill="#C2C874"/><rect x="24" y="346" width="4" height="2" fill="#E8AC8C"/><rect x="21" y="349" width="6" height="2" fill="#C2C874"/><rect x="27" y="349" width="6" height="2" fill="#E8AC8C"/><rect x="33" y="349" width="1" height="2" fill="#C2C874"/><rect x="21" y="352" width="13" height="2" fill="#E8AC8C"/><rect x="21" y="355" width="3" height="2" fill="#C2C874"/><rect x="24" y="355" width="6" height="2" fill="#E8AC8C"/><rect x="30" y="355" width="4" height="2" fill="#C2C874"/><rect x="21" y="358" width="1" height="2" fill="#C2C874"/><rect x="22" y="358" width="4" height="2" fill="#E8AC8C"/><rect x="27" y="358" width="6" height="2" fill="#A6A8DC"/><rect x="33" y="358" width="1" height="2" fill="#C2C874"/><rect x="34" y="358" width="17" height="2" fill="#9FC9B8"/><rect x="27" y="361" width="1" height="2" fill="#C2C874"/><rect x="28" y="361" width="9" height="2" fill="#E8AC8C"/><rect x="38" y="361" width="14" height="2" fill="#E8AC8C"/><rect x="52" y="361" width="2" height="2" fill="#C2C874"/><rect x="54" y="361" width="4" height="2" fill="#9FC9B8"/><rect x="28" y="364" width="2" height="2" fill="#C2C874"/><rect x="30" y="364" width="1" height="2" fill="#E8AC8C"/><rect x="32" y="364" width="6" height="2" fill="#E8AC8C"/><rect x="38" y="364" width="41" height="2" fill="#9FC9B8"/><rect x="79" y="364" width="1" height="2" fill="#C2C874"/><rect x="80" y="364" width="5" height="2" fill="#9FC9B8"/><rect x="30" y="367" width="1" height="2" fill="#C2C874"/><rect x="31" y="367" width="3" height="2" fill="#E8AC8C"/><rect x="36" y="367" width="6" height="2" fill="#A6A8DC"/><rect x="42" y="367" width="1" height="2" fill="#C2C874"/><rect x="43" y="367" width="9" height="2" fill="#9FC9B8"/><rect x="30" y="370" width="1" height="2" fill="#C2C874"/><rect x="31" y="370" width="1" height="2" fill="#E8AC8C"/><rect x="33" y="370" width="6" height="2" fill="#A6A8DC"/><rect x="39" y="370" width="1" height="2" fill="#C2C874"/><rect x="40" y="370" width="11" height="2" fill="#9FC9B8"/><rect x="52" y="370" width="16" height="2" fill="#9FC9B8"/><rect x="68" y="370" width="4" height="2" fill="#C2C874"/><rect x="72" y="370" width="2" height="2" fill="#E8AC8C"/><rect x="30" y="373" width="1" height="2" fill="#C2C874"/><rect x="31" y="373" width="3" height="2" fill="#E8AC8C"/><rect x="36" y="373" width="1" height="2" fill="#A0A3A0"/><rect x="38" y="373" width="8" height="2" fill="#A0A3A0"/><rect x="46" y="373" width="6" height="2" fill="#E8AC8C"/><rect x="52" y="373" width="3" height="2" fill="#A0A3A0"/><rect x="55" y="373" width="2" height="2" fill="#C2C874"/><rect x="57" y="373" width="3" height="2" fill="#E8AC8C"/><rect x="60" y="373" width="3" height="2" fill="#C2C874"/><rect x="63" y="373" width="4" height="2" fill="#E8AC8C"/><rect x="30" y="376" width="2" height="2" fill="#C2C874"/><rect x="32" y="376" width="5" height="2" fill="#E8AC8C"/><rect x="26" y="379" width="1" height="2" fill="#C2C874"/><rect x="27" y="379" width="4" height="2" fill="#E8AC8C"/><rect x="32" y="379" width="6" height="2" fill="#A6A8DC"/><rect x="38" y="379" width="1" height="2" fill="#C2C874"/><rect x="39" y="379" width="10" height="2" fill="#9FC9B8"/><rect x="28" y="382" width="2" height="2" fill="#C2C874"/><rect x="30" y="382" width="1" height="2" fill="#E8AC8C"/><rect x="32" y="382" width="6" height="2" fill="#A6A8DC"/><rect x="38" y="382" width="1" height="2" fill="#C2C874"/><rect x="39" y="382" width="11" height="2" fill="#9FC9B8"/><rect x="51" y="382" width="19" height="2" fill="#9FC9B8"/><rect x="70" y="382" width="4" height="2" fill="#C2C874"/><rect x="74" y="382" width="2" height="2" fill="#E8AC8C"/><rect x="22" y="385" width="3" height="2" fill="#C2C874"/><rect x="25" y="385" width="3" height="2" fill="#E8AC8C"/><rect x="28" y="385" width="2" height="2" fill="#C2C874"/><rect x="22" y="388" width="3" height="2" fill="#C2C874"/><rect x="25" y="388" width="8" height="2" fill="#E8AC8C"/><rect x="33" y="388" width="1" height="2" fill="#C2C874"/><rect x="21" y="391" width="3" height="2" fill="#C2C874"/><rect x="24" y="391" width="4" height="2" fill="#E8AC8C"/><rect x="21" y="397" width="1" height="2" fill="#C2C874"/><rect x="22" y="397" width="4" height="2" fill="#E8AC8C"/><rect x="27" y="397" width="6" height="2" fill="#A6A8DC"/><rect x="33" y="397" width="1" height="2" fill="#C2C874"/><rect x="34" y="397" width="15" height="2" fill="#9FC9B8"/><rect x="49" y="397" width="1" height="2" fill="#C2C874"/><rect x="26" y="400" width="1" height="2" fill="#C2C874"/><rect x="27" y="400" width="1" height="2" fill="#E8AC8C"/><rect x="30" y="400" width="4" height="2" fill="#E8AC8C"/><rect x="34" y="400" width="2" height="2" fill="#C2C874"/><rect x="36" y="400" width="31" height="2" fill="#9FC9B8"/><rect x="68" y="400" width="6" height="2" fill="#A6A8DC"/><rect x="74" y="400" width="1" height="2" fill="#C2C874"/><rect x="75" y="400" width="10" height="2" fill="#9FC9B8"/><rect x="31" y="403" width="1" height="2" fill="#C2C874"/><rect x="32" y="403" width="4" height="2" fill="#E8AC8C"/><rect x="37" y="403" width="6" height="2" fill="#A6A8DC"/><rect x="43" y="403" width="1" height="2" fill="#C2C874"/><rect x="44" y="403" width="26" height="2" fill="#9FC9B8"/><rect x="70" y="403" width="2" height="2" fill="#C2C874"/><rect x="36" y="406" width="1" height="2" fill="#C2C874"/><rect x="37" y="406" width="3" height="2" fill="#E8AC8C"/><rect x="42" y="406" width="8" height="2" fill="#E8AC8C"/><rect x="50" y="406" width="4" height="2" fill="#9FC9B8"/><rect x="55" y="406" width="1" height="2" fill="#9FC9B8"/><rect x="57" y="406" width="3" height="2" fill="#9FC9B8"/><rect x="61" y="406" width="3" height="2" fill="#9FC9B8"/><rect x="64" y="406" width="3" height="2" fill="#C2C874"/><rect x="67" y="406" width="5" height="2" fill="#E8AC8C"/><rect x="73" y="406" width="1" height="2" fill="#E8AC8C"/><rect x="74" y="406" width="1" height="2" fill="#C2C874"/><rect x="75" y="406" width="10" height="2" fill="#9FC9B8"/><rect x="31" y="409" width="2" height="2" fill="#C2C874"/><rect x="33" y="409" width="5" height="2" fill="#E8AC8C"/><rect x="31" y="412" width="1" height="2" fill="#C2C874"/><rect x="32" y="412" width="4" height="2" fill="#E8AC8C"/><rect x="37" y="412" width="6" height="2" fill="#A6A8DC"/><rect x="43" y="412" width="1" height="2" fill="#C2C874"/><rect x="44" y="412" width="26" height="2" fill="#9FC9B8"/><rect x="70" y="412" width="2" height="2" fill="#C2C874"/><rect x="36" y="415" width="1" height="2" fill="#C2C874"/><rect x="37" y="415" width="2" height="2" fill="#E8AC8C"/><rect x="39" y="415" width="1" height="2" fill="#C2C874"/><rect x="40" y="415" width="8" height="2" fill="#E8AC8C"/><rect x="48" y="415" width="2" height="2" fill="#C2C874"/><rect x="50" y="415" width="2" height="2" fill="#E8AC8C"/><rect x="52" y="415" width="2" height="2" fill="#C2C874"/><rect x="31" y="418" width="2" height="2" fill="#C2C874"/><rect x="33" y="418" width="5" height="2" fill="#E8AC8C"/><rect x="26" y="421" width="2" height="2" fill="#C2C874"/><rect x="28" y="421" width="3" height="2" fill="#E8AC8C"/><rect x="26" y="424" width="1" height="2" fill="#C2C874"/><rect x="27" y="424" width="1" height="2" fill="#E8AC8C"/><rect x="30" y="424" width="4" height="2" fill="#E8AC8C"/><rect x="34" y="424" width="2" height="2" fill="#C2C874"/><rect x="36" y="424" width="30" height="2" fill="#9FC9B8"/><rect x="67" y="424" width="6" height="2" fill="#A6A8DC"/><rect x="73" y="424" width="1" height="2" fill="#C2C874"/><rect x="74" y="424" width="11" height="2" fill="#9FC9B8"/><rect x="31" y="427" width="1" height="2" fill="#C2C874"/><rect x="32" y="427" width="4" height="2" fill="#E8AC8C"/><rect x="37" y="427" width="6" height="2" fill="#A6A8DC"/><rect x="43" y="427" width="1" height="2" fill="#C2C874"/><rect x="44" y="427" width="26" height="2" fill="#9FC9B8"/><rect x="70" y="427" width="2" height="2" fill="#C2C874"/><rect x="36" y="430" width="1" height="2" fill="#C2C874"/><rect x="37" y="430" width="3" height="2" fill="#E8AC8C"/><rect x="42" y="430" width="8" height="2" fill="#E8AC8C"/><rect x="50" y="430" width="4" height="2" fill="#9FC9B8"/><rect x="55" y="430" width="1" height="2" fill="#9FC9B8"/><rect x="57" y="430" width="3" height="2" fill="#9FC9B8"/><rect x="61" y="430" width="3" height="2" fill="#9FC9B8"/><rect x="64" y="430" width="3" height="2" fill="#C2C874"/><rect x="67" y="430" width="5" height="2" fill="#E8AC8C"/><rect x="73" y="430" width="1" height="2" fill="#E8AC8C"/><rect x="74" y="430" width="1" height="2" fill="#C2C874"/><rect x="75" y="430" width="10" height="2" fill="#9FC9B8"/><rect x="31" y="433" width="2" height="2" fill="#C2C874"/><rect x="33" y="433" width="5" height="2" fill="#E8AC8C"/><rect x="31" y="436" width="1" height="2" fill="#C2C874"/><rect x="32" y="436" width="4" height="2" fill="#E8AC8C"/><rect x="37" y="436" width="6" height="2" fill="#A6A8DC"/><rect x="43" y="436" width="1" height="2" fill="#C2C874"/><rect x="44" y="436" width="26" height="2" fill="#9FC9B8"/><rect x="70" y="436" width="2" height="2" fill="#C2C874"/><rect x="36" y="439" width="1" height="2" fill="#C2C874"/><rect x="37" y="439" width="2" height="2" fill="#E8AC8C"/><rect x="39" y="439" width="1" height="2" fill="#C2C874"/><rect x="40" y="439" width="8" height="2" fill="#E8AC8C"/><rect x="48" y="439" width="2" height="2" fill="#C2C874"/><rect x="50" y="439" width="2" height="2" fill="#E8AC8C"/><rect x="52" y="439" width="2" height="2" fill="#C2C874"/><rect x="31" y="442" width="2" height="2" fill="#C2C874"/><rect x="33" y="442" width="5" height="2" fill="#E8AC8C"/><rect x="26" y="445" width="2" height="2" fill="#C2C874"/><rect x="28" y="445" width="3" height="2" fill="#E8AC8C"/><rect x="26" y="448" width="1" height="2" fill="#C2C874"/><rect x="27" y="448" width="1" height="2" fill="#E8AC8C"/><rect x="30" y="448" width="4" height="2" fill="#E8AC8C"/><rect x="34" y="448" width="2" height="2" fill="#C2C874"/><rect x="36" y="448" width="16" height="2" fill="#9FC9B8"/><rect x="54" y="448" width="6" height="2" fill="#A6A8DC"/><rect x="60" y="448" width="1" height="2" fill="#C2C874"/><rect x="61" y="448" width="21" height="2" fill="#9FC9B8"/><rect x="82" y="448" width="1" height="2" fill="#C2C874"/><rect x="31" y="451" width="1" height="2" fill="#C2C874"/><rect x="32" y="451" width="4" height="2" fill="#E8AC8C"/><rect x="37" y="451" width="6" height="2" fill="#A6A8DC"/><rect x="43" y="451" width="1" height="2" fill="#C2C874"/><rect x="44" y="451" width="26" height="2" fill="#9FC9B8"/><rect x="70" y="451" width="2" height="2" fill="#C2C874"/><rect x="36" y="454" width="1" height="2" fill="#C2C874"/><rect x="37" y="454" width="3" height="2" fill="#E8AC8C"/><rect x="42" y="454" width="8" height="2" fill="#E8AC8C"/><rect x="50" y="454" width="4" height="2" fill="#9FC9B8"/><rect x="55" y="454" width="1" height="2" fill="#9FC9B8"/><rect x="57" y="454" width="3" height="2" fill="#9FC9B8"/><rect x="61" y="454" width="3" height="2" fill="#9FC9B8"/><rect x="64" y="454" width="3" height="2" fill="#C2C874"/><rect x="67" y="454" width="5" height="2" fill="#E8AC8C"/><rect x="73" y="454" width="1" height="2" fill="#E8AC8C"/><rect x="74" y="454" width="1" height="2" fill="#C2C874"/><rect x="75" y="454" width="10" height="2" fill="#9FC9B8"/><rect x="31" y="457" width="2" height="2" fill="#C2C874"/><rect x="33" y="457" width="5" height="2" fill="#E8AC8C"/><rect x="31" y="460" width="1" height="2" fill="#C2C874"/><rect x="32" y="460" width="4" height="2" fill="#E8AC8C"/><rect x="37" y="460" width="6" height="2" fill="#A6A8DC"/><rect x="43" y="460" width="1" height="2" fill="#C2C874"/><rect x="44" y="460" width="26" height="2" fill="#9FC9B8"/><rect x="70" y="460" width="2" height="2" fill="#C2C874"/><rect x="36" y="463" width="1" height="2" fill="#C2C874"/><rect x="37" y="463" width="2" height="2" fill="#E8AC8C"/><rect x="39" y="463" width="1" height="2" fill="#C2C874"/><rect x="40" y="463" width="8" height="2" fill="#E8AC8C"/><rect x="48" y="463" width="2" height="2" fill="#C2C874"/><rect x="50" y="463" width="2" height="2" fill="#E8AC8C"/><rect x="52" y="463" width="2" height="2" fill="#C2C874"/><rect x="31" y="466" width="2" height="2" fill="#C2C874"/><rect x="33" y="466" width="5" height="2" fill="#E8AC8C"/><rect x="26" y="469" width="2" height="2" fill="#C2C874"/><rect x="28" y="469" width="3" height="2" fill="#E8AC8C"/><rect x="26" y="472" width="1" height="2" fill="#C2C874"/><rect x="27" y="472" width="1" height="2" fill="#E8AC8C"/><rect x="30" y="472" width="4" height="2" fill="#E8AC8C"/><rect x="34" y="472" width="2" height="2" fill="#C2C874"/><rect x="36" y="472" width="49" height="2" fill="#9FC9B8"/><rect x="31" y="475" width="1" height="2" fill="#C2C874"/><rect x="32" y="475" width="4" height="2" fill="#E8AC8C"/><rect x="37" y="475" width="6" height="2" fill="#A6A8DC"/><rect x="43" y="475" width="1" height="2" fill="#C2C874"/><rect x="44" y="475" width="26" height="2" fill="#9FC9B8"/><rect x="70" y="475" width="2" height="2" fill="#C2C874"/><rect x="36" y="478" width="1" height="2" fill="#C2C874"/><rect x="37" y="478" width="3" height="2" fill="#E8AC8C"/><rect x="42" y="478" width="8" height="2" fill="#E8AC8C"/><rect x="50" y="478" width="4" height="2" fill="#9FC9B8"/><rect x="55" y="478" width="1" height="2" fill="#9FC9B8"/><rect x="57" y="478" width="3" height="2" fill="#9FC9B8"/><rect x="61" y="478" width="3" height="2" fill="#9FC9B8"/><rect x="64" y="478" width="3" height="2" fill="#C2C874"/><rect x="67" y="478" width="5" height="2" fill="#E8AC8C"/><rect x="73" y="478" width="1" height="2" fill="#E8AC8C"/><rect x="74" y="478" width="1" height="2" fill="#C2C874"/><rect x="75" y="478" width="10" height="2" fill="#9FC9B8"/><rect x="31" y="481" width="2" height="2" fill="#C2C874"/><rect x="33" y="481" width="5" height="2" fill="#E8AC8C"/><rect x="31" y="484" width="1" height="2" fill="#C2C874"/><rect x="32" y="484" width="4" height="2" fill="#E8AC8C"/><rect x="37" y="484" width="6" height="2" fill="#A6A8DC"/><rect x="43" y="484" width="1" height="2" fill="#C2C874"/><rect x="44" y="484" width="26" height="2" fill="#9FC9B8"/><rect x="70" y="484" width="2" height="2" fill="#C2C874"/><rect x="36" y="487" width="1" height="2" fill="#C2C874"/><rect x="37" y="487" width="2" height="2" fill="#E8AC8C"/><rect x="39" y="487" width="1" height="2" fill="#C2C874"/><rect x="40" y="487" width="8" height="2" fill="#E8AC8C"/><rect x="48" y="487" width="2" height="2" fill="#C2C874"/><rect x="50" y="487" width="2" height="2" fill="#E8AC8C"/><rect x="52" y="487" width="2" height="2" fill="#C2C874"/><rect x="31" y="490" width="2" height="2" fill="#C2C874"/><rect x="33" y="490" width="5" height="2" fill="#E8AC8C"/><rect x="26" y="493" width="2" height="2" fill="#C2C874"/><rect x="28" y="493" width="3" height="2" fill="#E8AC8C"/><rect x="26" y="496" width="1" height="2" fill="#C2C874"/><rect x="27" y="496" width="1" height="2" fill="#E8AC8C"/><rect x="30" y="496" width="4" height="2" fill="#E8AC8C"/><rect x="34" y="496" width="2" height="2" fill="#C2C874"/><rect x="36" y="496" width="27" height="2" fill="#9FC9B8"/><rect x="64" y="496" width="6" height="2" fill="#A6A8DC"/><rect x="70" y="496" width="1" height="2" fill="#C2C874"/><rect x="71" y="496" width="14" height="2" fill="#9FC9B8"/><rect x="31" y="499" width="1" height="2" fill="#C2C874"/><rect x="32" y="499" width="4" height="2" fill="#E8AC8C"/><rect x="37" y="499" width="6" height="2" fill="#A6A8DC"/><rect x="43" y="499" width="1" height="2" fill="#C2C874"/><rect x="44" y="499" width="26" height="2" fill="#9FC9B8"/><rect x="70" y="499" width="2" height="2" fill="#C2C874"/><rect x="36" y="502" width="1" height="2" fill="#C2C874"/><rect x="37" y="502" width="3" height="2" fill="#E8AC8C"/><rect x="42" y="502" width="8" height="2" fill="#E8AC8C"/><rect x="50" y="502" width="4" height="2" fill="#9FC9B8"/><rect x="55" y="502" width="1" height="2" fill="#9FC9B8"/><rect x="57" y="502" width="3" height="2" fill="#9FC9B8"/><rect x="61" y="502" width="3" height="2" fill="#9FC9B8"/><rect x="64" y="502" width="3" height="2" fill="#C2C874"/><rect x="67" y="502" width="5" height="2" fill="#E8AC8C"/><rect x="73" y="502" width="1" height="2" fill="#E8AC8C"/><rect x="74" y="502" width="1" height="2" fill="#C2C874"/><rect x="75" y="502" width="10" height="2" fill="#9FC9B8"/><rect x="31" y="505" width="2" height="2" fill="#C2C874"/><rect x="33" y="505" width="5" height="2" fill="#E8AC8C"/><rect x="31" y="508" width="1" height="2" fill="#C2C874"/><rect x="32" y="508" width="4" height="2" fill="#E8AC8C"/><rect x="37" y="508" width="6" height="2" fill="#A6A8DC"/><rect x="43" y="508" width="1" height="2" fill="#C2C874"/><rect x="44" y="508" width="26" height="2" fill="#9FC9B8"/><rect x="70" y="508" width="2" height="2" fill="#C2C874"/><rect x="36" y="511" width="1" height="2" fill="#C2C874"/><rect x="37" y="511" width="2" height="2" fill="#E8AC8C"/><rect x="39" y="511" width="1" height="2" fill="#C2C874"/><rect x="40" y="511" width="8" height="2" fill="#E8AC8C"/><rect x="48" y="511" width="2" height="2" fill="#C2C874"/><rect x="50" y="511" width="2" height="2" fill="#E8AC8C"/><rect x="52" y="511" width="2" height="2" fill="#C2C874"/><rect x="31" y="514" width="2" height="2" fill="#C2C874"/><rect x="33" y="514" width="5" height="2" fill="#E8AC8C"/><rect x="26" y="517" width="2" height="2" fill="#C2C874"/><rect x="28" y="517" width="3" height="2" fill="#E8AC8C"/><rect x="21" y="520" width="3" height="2" fill="#C2C874"/><rect x="24" y="520" width="4" height="2" fill="#E8AC8C"/><rect x="21" y="526" width="5" height="2" fill="#C2C874"/><rect x="27" y="526" width="11" height="2" fill="#E8AC8C"/><rect x="39" y="526" width="4" height="2" fill="#C2C874"/><rect x="21" y="529" width="1" height="2" fill="#C2C874"/><rect x="22" y="529" width="4" height="2" fill="#E8AC8C"/><rect x="27" y="529" width="6" height="2" fill="#A6A8DC"/><rect x="33" y="529" width="1" height="2" fill="#C2C874"/><rect x="34" y="529" width="18" height="2" fill="#9FC9B8"/><rect x="52" y="529" width="2" height="2" fill="#C2C874"/><rect x="26" y="532" width="1" height="2" fill="#C2C874"/><rect x="27" y="532" width="4" height="2" fill="#E8AC8C"/><rect x="32" y="532" width="6" height="2" fill="#A6A8DC"/><rect x="38" y="532" width="1" height="2" fill="#C2C874"/><rect x="39" y="532" width="12" height="2" fill="#9FC9B8"/><rect x="51" y="532" width="1" height="2" fill="#C2C874"/><rect x="26" y="535" width="1" height="2" fill="#C2C874"/><rect x="27" y="535" width="1" height="2" fill="#E8AC8C"/><rect x="30" y="535" width="4" height="2" fill="#E8AC8C"/><rect x="34" y="535" width="2" height="2" fill="#C2C874"/><rect x="36" y="535" width="8" height="2" fill="#9FC9B8"/><rect x="45" y="535" width="6" height="2" fill="#A6A8DC"/><rect x="51" y="535" width="1" height="2" fill="#C2C874"/><rect x="52" y="535" width="18" height="2" fill="#9FC9B8"/><rect x="70" y="535" width="2" height="2" fill="#C2C874"/><rect x="36" y="538" width="1" height="2" fill="#C2C874"/><rect x="37" y="538" width="3" height="2" fill="#E8AC8C"/><rect x="42" y="538" width="6" height="2" fill="#A6A8DC"/><rect x="48" y="538" width="1" height="2" fill="#C2C874"/><rect x="49" y="538" width="19" height="2" fill="#9FC9B8"/><rect x="68" y="538" width="1" height="2" fill="#C2C874"/><rect x="40" y="541" width="1" height="2" fill="#C2C874"/><rect x="41" y="541" width="4" height="2" fill="#E8AC8C"/><rect x="46" y="541" width="9" height="2" fill="#E8AC8C"/><rect x="55" y="541" width="3" height="2" fill="#9FC9B8"/><rect x="60" y="541" width="1" height="2" fill="#9FC9B8"/><rect x="62" y="541" width="2" height="2" fill="#9FC9B8"/><rect x="66" y="541" width="3" height="2" fill="#9FC9B8"/><rect x="69" y="541" width="1" height="2" fill="#C2C874"/><rect x="45" y="544" width="1" height="2" fill="#C2C874"/><rect x="46" y="544" width="5" height="2" fill="#E8AC8C"/><rect x="52" y="544" width="2" height="2" fill="#E8AC8C"/><rect x="54" y="544" width="1" height="2" fill="#C2C874"/><rect x="54" y="544" width="19" height="2" fill="#9FC9B8"/><rect x="74" y="544" width="1" height="2" fill="#9FC9B8"/><rect x="76" y="544" width="4" height="2" fill="#9FC9B8"/><rect x="81" y="544" width="4" height="2" fill="#9FC9B8"/><rect x="40" y="547" width="3" height="2" fill="#C2C874"/><rect x="43" y="547" width="3" height="2" fill="#E8AC8C"/><rect x="46" y="547" width="2" height="2" fill="#C2C874"/><rect x="36" y="550" width="2" height="2" fill="#C2C874"/><rect x="38" y="550" width="5" height="2" fill="#E8AC8C"/><rect x="36" y="553" width="1" height="2" fill="#C2C874"/><rect x="37" y="553" width="5" height="2" fill="#E8AC8C"/><rect x="43" y="553" width="6" height="2" fill="#A6A8DC"/><rect x="49" y="553" width="1" height="2" fill="#C2C874"/><rect x="50" y="553" width="18" height="2" fill="#9FC9B8"/><rect x="68" y="553" width="1" height="2" fill="#C2C874"/><rect x="69" y="553" width="7" height="2" fill="#E8AC8C"/><rect x="76" y="553" width="3" height="2" fill="#C2C874"/><rect x="79" y="553" width="6" height="2" fill="#E8AC8C"/><rect x="31" y="556" width="2" height="2" fill="#C2C874"/><rect x="33" y="556" width="1" height="2" fill="#E8AC8C"/><rect x="34" y="556" width="2" height="2" fill="#C2C874"/><rect x="31" y="559" width="1" height="2" fill="#C2C874"/><rect x="32" y="559" width="1" height="2" fill="#E8AC8C"/><rect x="34" y="559" width="5" height="2" fill="#E8AC8C"/><rect x="39" y="559" width="7" height="2" fill="#9FC9B8"/><rect x="48" y="559" width="6" height="2" fill="#A6A8DC"/><rect x="54" y="559" width="1" height="2" fill="#C2C874"/><rect x="55" y="559" width="17" height="2" fill="#9FC9B8"/><rect x="73" y="559" width="8" height="2" fill="#9FC9B8"/><rect x="81" y="559" width="1" height="2" fill="#C2C874"/><rect x="36" y="562" width="1" height="2" fill="#C2C874"/><rect x="37" y="562" width="3" height="2" fill="#E8AC8C"/><rect x="42" y="562" width="6" height="2" fill="#A6A8DC"/><rect x="48" y="562" width="1" height="2" fill="#C2C874"/><rect x="49" y="562" width="19" height="2" fill="#9FC9B8"/><rect x="68" y="562" width="1" height="2" fill="#C2C874"/><rect x="40" y="565" width="1" height="2" fill="#C2C874"/><rect x="41" y="565" width="4" height="2" fill="#E8AC8C"/><rect x="46" y="565" width="9" height="2" fill="#E8AC8C"/><rect x="55" y="565" width="3" height="2" fill="#9FC9B8"/><rect x="60" y="565" width="1" height="2" fill="#9FC9B8"/><rect x="62" y="565" width="2" height="2" fill="#9FC9B8"/><rect x="66" y="565" width="3" height="2" fill="#9FC9B8"/><rect x="69" y="565" width="1" height="2" fill="#C2C874"/><rect x="45" y="568" width="1" height="2" fill="#C2C874"/><rect x="46" y="568" width="5" height="2" fill="#E8AC8C"/><rect x="52" y="568" width="2" height="2" fill="#E8AC8C"/><rect x="54" y="568" width="1" height="2" fill="#C2C874"/><rect x="54" y="568" width="22" height="2" fill="#9FC9B8"/><rect x="78" y="568" width="7" height="2" fill="#9FC9B8"/><rect x="40" y="571" width="3" height="2" fill="#C2C874"/><rect x="43" y="571" width="3" height="2" fill="#E8AC8C"/><rect x="46" y="571" width="2" height="2" fill="#C2C874"/><rect x="36" y="574" width="2" height="2" fill="#C2C874"/><rect x="38" y="574" width="5" height="2" fill="#E8AC8C"/><rect x="36" y="577" width="1" height="2" fill="#C2C874"/><rect x="37" y="577" width="5" height="2" fill="#E8AC8C"/><rect x="43" y="577" width="6" height="2" fill="#A6A8DC"/><rect x="49" y="577" width="1" height="2" fill="#C2C874"/><rect x="50" y="577" width="18" height="2" fill="#9FC9B8"/><rect x="68" y="577" width="5" height="2" fill="#E8AC8C"/><rect x="73" y="577" width="2" height="2" fill="#C2C874"/><rect x="75" y="577" width="5" height="2" fill="#E8AC8C"/><rect x="80" y="577" width="1" height="2" fill="#C2C874"/><rect x="31" y="580" width="2" height="2" fill="#C2C874"/><rect x="33" y="580" width="1" height="2" fill="#E8AC8C"/><rect x="34" y="580" width="2" height="2" fill="#C2C874"/><rect x="31" y="583" width="1" height="2" fill="#C2C874"/><rect x="32" y="583" width="1" height="2" fill="#E8AC8C"/><rect x="34" y="583" width="5" height="2" fill="#E8AC8C"/><rect x="39" y="583" width="9" height="2" fill="#9FC9B8"/><rect x="49" y="583" width="6" height="2" fill="#A6A8DC"/><rect x="55" y="583" width="1" height="2" fill="#C2C874"/><rect x="56" y="583" width="18" height="2" fill="#9FC9B8"/><rect x="74" y="583" width="1" height="2" fill="#C2C874"/><rect x="36" y="586" width="1" height="2" fill="#C2C874"/><rect x="37" y="586" width="3" height="2" fill="#E8AC8C"/><rect x="42" y="586" width="6" height="2" fill="#A6A8DC"/><rect x="48" y="586" width="1" height="2" fill="#C2C874"/><rect x="49" y="586" width="19" height="2" fill="#9FC9B8"/><rect x="68" y="586" width="1" height="2" fill="#C2C874"/><rect x="40" y="589" width="1" height="2" fill="#C2C874"/><rect x="41" y="589" width="4" height="2" fill="#E8AC8C"/><rect x="46" y="589" width="9" height="2" fill="#E8AC8C"/><rect x="55" y="589" width="3" height="2" fill="#9FC9B8"/><rect x="60" y="589" width="1" height="2" fill="#9FC9B8"/><rect x="62" y="589" width="2" height="2" fill="#9FC9B8"/><rect x="66" y="589" width="3" height="2" fill="#9FC9B8"/><rect x="69" y="589" width="1" height="2" fill="#C2C874"/><rect x="45" y="592" width="1" height="2" fill="#C2C874"/><rect x="46" y="592" width="5" height="2" fill="#E8AC8C"/><rect x="52" y="592" width="2" height="2" fill="#E8AC8C"/><rect x="54" y="592" width="1" height="2" fill="#C2C874"/><rect x="54" y="592" width="14" height="2" fill="#9FC9B8"/><rect x="69" y="592" width="1" height="2" fill="#9FC9B8"/><rect x="72" y="592" width="3" height="2" fill="#9FC9B8"/><rect x="76" y="592" width="9" height="2" fill="#9FC9B8"/><rect x="40" y="595" width="3" height="2" fill="#C2C874"/><rect x="43" y="595" width="3" height="2" fill="#E8AC8C"/><rect x="46" y="595" width="2" height="2" fill="#C2C874"/><rect x="36" y="598" width="2" height="2" fill="#C2C874"/><rect x="38" y="598" width="5" height="2" fill="#E8AC8C"/><rect x="36" y="601" width="1" height="2" fill="#C2C874"/><rect x="37" y="601" width="5" height="2" fill="#E8AC8C"/><rect x="43" y="601" width="6" height="2" fill="#A6A8DC"/><rect x="49" y="601" width="1" height="2" fill="#C2C874"/><rect x="50" y="601" width="18" height="2" fill="#9FC9B8"/><rect x="68" y="601" width="7" height="2" fill="#E8AC8C"/><rect x="75" y="601" width="2" height="2" fill="#C2C874"/><rect x="77" y="601" width="6" height="2" fill="#E8AC8C"/><rect x="31" y="604" width="2" height="2" fill="#C2C874"/><rect x="33" y="604" width="1" height="2" fill="#E8AC8C"/><rect x="34" y="604" width="2" height="2" fill="#C2C874"/><rect x="31" y="607" width="1" height="2" fill="#C2C874"/><rect x="32" y="607" width="1" height="2" fill="#E8AC8C"/><rect x="34" y="607" width="5" height="2" fill="#E8AC8C"/><rect x="39" y="607" width="9" height="2" fill="#9FC9B8"/><rect x="49" y="607" width="6" height="2" fill="#A6A8DC"/><rect x="55" y="607" width="1" height="2" fill="#C2C874"/><rect x="56" y="607" width="18" height="2" fill="#9FC9B8"/><rect x="74" y="607" width="1" height="2" fill="#C2C874"/><rect x="36" y="610" width="1" height="2" fill="#C2C874"/><rect x="37" y="610" width="3" height="2" fill="#E8AC8C"/><rect x="42" y="610" width="6" height="2" fill="#A6A8DC"/><rect x="48" y="610" width="1" height="2" fill="#C2C874"/><rect x="49" y="610" width="19" height="2" fill="#9FC9B8"/><rect x="68" y="610" width="1" height="2" fill="#C2C874"/><rect x="40" y="613" width="1" height="2" fill="#C2C874"/><rect x="41" y="613" width="4" height="2" fill="#E8AC8C"/><rect x="46" y="613" width="9" height="2" fill="#E8AC8C"/><rect x="55" y="613" width="3" height="2" fill="#9FC9B8"/><rect x="60" y="613" width="1" height="2" fill="#9FC9B8"/><rect x="62" y="613" width="2" height="2" fill="#9FC9B8"/><rect x="66" y="613" width="3" height="2" fill="#9FC9B8"/><rect x="69" y="613" width="1" height="2" fill="#C2C874"/><rect x="45" y="616" width="1" height="2" fill="#C2C874"/><rect x="46" y="616" width="5" height="2" fill="#E8AC8C"/><rect x="52" y="616" width="2" height="2" fill="#E8AC8C"/><rect x="54" y="616" width="1" height="2" fill="#C2C874"/><rect x="54" y="616" width="19" height="2" fill="#9FC9B8"/><rect x="74" y="616" width="7" height="2" fill="#9FC9B8"/><rect x="82" y="616" width="3" height="2" fill="#9FC9B8"/><rect x="40" y="619" width="3" height="2" fill="#C2C874"/><rect x="43" y="619" width="3" height="2" fill="#E8AC8C"/><rect x="46" y="619" width="2" height="2" fill="#C2C874"/><rect x="36" y="622" width="2" height="2" fill="#C2C874"/><rect x="38" y="622" width="5" height="2" fill="#E8AC8C"/><rect x="36" y="625" width="1" height="2" fill="#C2C874"/><rect x="37" y="625" width="5" height="2" fill="#E8AC8C"/><rect x="43" y="625" width="6" height="2" fill="#A6A8DC"/><rect x="49" y="625" width="1" height="2" fill="#C2C874"/><rect x="50" y="625" width="18" height="2" fill="#9FC9B8"/><rect x="68" y="625" width="6" height="2" fill="#E8AC8C"/><rect x="74" y="625" width="2" height="2" fill="#C2C874"/><rect x="76" y="625" width="6" height="2" fill="#E8AC8C"/><rect x="31" y="628" width="2" height="2" fill="#C2C874"/><rect x="33" y="628" width="1" height="2" fill="#E8AC8C"/><rect x="34" y="628" width="2" height="2" fill="#C2C874"/><rect x="31" y="631" width="1" height="2" fill="#C2C874"/><rect x="32" y="631" width="1" height="2" fill="#E8AC8C"/><rect x="34" y="631" width="5" height="2" fill="#E8AC8C"/><rect x="39" y="631" width="10" height="2" fill="#9FC9B8"/><rect x="50" y="631" width="6" height="2" fill="#A6A8DC"/><rect x="56" y="631" width="1" height="2" fill="#C2C874"/><rect x="57" y="631" width="18" height="2" fill="#9FC9B8"/><rect x="75" y="631" width="1" height="2" fill="#C2C874"/><rect x="36" y="634" width="1" height="2" fill="#C2C874"/><rect x="37" y="634" width="3" height="2" fill="#E8AC8C"/><rect x="42" y="634" width="6" height="2" fill="#A6A8DC"/><rect x="48" y="634" width="1" height="2" fill="#C2C874"/><rect x="49" y="634" width="19" height="2" fill="#9FC9B8"/><rect x="68" y="634" width="1" height="2" fill="#C2C874"/><rect x="40" y="637" width="1" height="2" fill="#C2C874"/><rect x="41" y="637" width="4" height="2" fill="#E8AC8C"/><rect x="46" y="637" width="9" height="2" fill="#E8AC8C"/><rect x="55" y="637" width="3" height="2" fill="#9FC9B8"/><rect x="60" y="637" width="1" height="2" fill="#9FC9B8"/><rect x="62" y="637" width="2" height="2" fill="#9FC9B8"/><rect x="66" y="637" width="3" height="2" fill="#9FC9B8"/><rect x="69" y="637" width="1" height="2" fill="#C2C874"/><rect x="45" y="640" width="1" height="2" fill="#C2C874"/><rect x="46" y="640" width="5" height="2" fill="#E8AC8C"/><rect x="52" y="640" width="2" height="2" fill="#E8AC8C"/><rect x="54" y="640" width="1" height="2" fill="#C2C874"/><rect x="54" y="640" width="31" height="2" fill="#9FC9B8"/><rect x="40" y="643" width="3" height="2" fill="#C2C874"/><rect x="43" y="643" width="3" height="2" fill="#E8AC8C"/><rect x="46" y="643" width="2" height="2" fill="#C2C874"/><rect x="36" y="646" width="2" height="2" fill="#C2C874"/><rect x="38" y="646" width="5" height="2" fill="#E8AC8C"/><rect x="36" y="649" width="1" height="2" fill="#C2C874"/><rect x="37" y="649" width="5" height="2" fill="#E8AC8C"/><rect x="43" y="649" width="6" height="2" fill="#A6A8DC"/><rect x="49" y="649" width="1" height="2" fill="#C2C874"/><rect x="50" y="649" width="18" height="2" fill="#9FC9B8"/><rect x="68" y="649" width="8" height="2" fill="#E8AC8C"/><rect x="76" y="649" width="2" height="2" fill="#C2C874"/><rect x="78" y="649" width="7" height="2" fill="#E8AC8C"/><rect x="31" y="652" width="2" height="2" fill="#C2C874"/><rect x="33" y="652" width="1" height="2" fill="#E8AC8C"/><rect x="34" y="652" width="2" height="2" fill="#C2C874"/><rect x="31" y="655" width="1" height="2" fill="#C2C874"/><rect x="32" y="655" width="1" height="2" fill="#E8AC8C"/><rect x="34" y="655" width="5" height="2" fill="#E8AC8C"/><rect x="39" y="655" width="7" height="2" fill="#9FC9B8"/><rect x="48" y="655" width="6" height="2" fill="#A6A8DC"/><rect x="54" y="655" width="1" height="2" fill="#C2C874"/><rect x="55" y="655" width="18" height="2" fill="#9FC9B8"/><rect x="73" y="655" width="1" height="2" fill="#C2C874"/><rect x="36" y="658" width="1" height="2" fill="#C2C874"/><rect x="37" y="658" width="3" height="2" fill="#E8AC8C"/><rect x="42" y="658" width="6" height="2" fill="#A6A8DC"/><rect x="48" y="658" width="1" height="2" fill="#C2C874"/><rect x="49" y="658" width="19" height="2" fill="#9FC9B8"/><rect x="68" y="658" width="1" height="2" fill="#C2C874"/><rect x="40" y="661" width="1" height="2" fill="#C2C874"/><rect x="41" y="661" width="4" height="2" fill="#E8AC8C"/><rect x="46" y="661" width="9" height="2" fill="#E8AC8C"/><rect x="55" y="661" width="3" height="2" fill="#9FC9B8"/><rect x="60" y="661" width="1" height="2" fill="#9FC9B8"/><rect x="62" y="661" width="2" height="2" fill="#9FC9B8"/><rect x="66" y="661" width="3" height="2" fill="#9FC9B8"/><rect x="69" y="661" width="1" height="2" fill="#C2C874"/><rect x="45" y="664" width="1" height="2" fill="#C2C874"/><rect x="46" y="664" width="5" height="2" fill="#E8AC8C"/><rect x="52" y="664" width="2" height="2" fill="#E8AC8C"/><rect x="54" y="664" width="1" height="2" fill="#C2C874"/><rect x="54" y="664" width="30" height="2" fill="#9FC9B8"/><rect x="40" y="667" width="3" height="2" fill="#C2C874"/><rect x="43" y="667" width="3" height="2" fill="#E8AC8C"/><rect x="46" y="667" width="2" height="2" fill="#C2C874"/><rect x="36" y="670" width="2" height="2" fill="#C2C874"/><rect x="38" y="670" width="5" height="2" fill="#E8AC8C"/><rect x="36" y="673" width="1" height="2" fill="#C2C874"/><rect x="37" y="673" width="5" height="2" fill="#E8AC8C"/><rect x="43" y="673" width="6" height="2" fill="#A6A8DC"/><rect x="49" y="673" width="1" height="2" fill="#C2C874"/><rect x="50" y="673" width="18" height="2" fill="#9FC9B8"/><rect x="68" y="673" width="8" height="2" fill="#E8AC8C"/><rect x="76" y="673" width="2" height="2" fill="#C2C874"/><rect x="78" y="673" width="7" height="2" fill="#E8AC8C"/><rect x="31" y="676" width="2" height="2" fill="#C2C874"/><rect x="33" y="676" width="1" height="2" fill="#E8AC8C"/><rect x="34" y="676" width="2" height="2" fill="#C2C874"/><rect x="31" y="679" width="1" height="2" fill="#C2C874"/><rect x="32" y="679" width="1" height="2" fill="#E8AC8C"/><rect x="34" y="679" width="5" height="2" fill="#E8AC8C"/><rect x="39" y="679" width="9" height="2" fill="#9FC9B8"/><rect x="49" y="679" width="6" height="2" fill="#A6A8DC"/><rect x="55" y="679" width="1" height="2" fill="#C2C874"/><rect x="56" y="679" width="18" height="2" fill="#9FC9B8"/><rect x="74" y="679" width="1" height="2" fill="#C2C874"/><rect x="36" y="682" width="1" height="2" fill="#C2C874"/><rect x="37" y="682" width="3" height="2" fill="#E8AC8C"/><rect x="42" y="682" width="6" height="2" fill="#A6A8DC"/><rect x="48" y="682" width="1" height="2" fill="#C2C874"/><rect x="49" y="682" width="19" height="2" fill="#9FC9B8"/><rect x="68" y="682" width="1" height="2" fill="#C2C874"/><rect x="40" y="685" width="1" height="2" fill="#C2C874"/><rect x="41" y="685" width="4" height="2" fill="#E8AC8C"/><rect x="46" y="685" width="9" height="2" fill="#E8AC8C"/><rect x="55" y="685" width="3" height="2" fill="#9FC9B8"/><rect x="60" y="685" width="1" height="2" fill="#9FC9B8"/><rect x="62" y="685" width="2" height="2" fill="#9FC9B8"/><rect x="66" y="685" width="3" height="2" fill="#9FC9B8"/><rect x="69" y="685" width="1" height="2" fill="#C2C874"/><rect x="45" y="688" width="1" height="2" fill="#C2C874"/><rect x="46" y="688" width="5" height="2" fill="#E8AC8C"/><rect x="52" y="688" width="2" height="2" fill="#E8AC8C"/><rect x="54" y="688" width="1" height="2" fill="#C2C874"/><rect x="54" y="688" width="14" height="2" fill="#9FC9B8"/><rect x="69" y="688" width="1" height="2" fill="#9FC9B8"/><rect x="72" y="688" width="3" height="2" fill="#9FC9B8"/><rect x="76" y="688" width="9" height="2" fill="#9FC9B8"/><rect x="45" y="691" width="3" height="2" fill="#C2C874"/><rect x="48" y="691" width="4" height="2" fill="#E8AC8C"/><rect x="36" y="694" width="2" height="2" fill="#C2C874"/><rect x="38" y="694" width="5" height="2" fill="#E8AC8C"/><rect x="36" y="697" width="1" height="2" fill="#C2C874"/><rect x="37" y="697" width="5" height="2" fill="#E8AC8C"/><rect x="43" y="697" width="6" height="2" fill="#A6A8DC"/><rect x="49" y="697" width="1" height="2" fill="#C2C874"/><rect x="50" y="697" width="18" height="2" fill="#9FC9B8"/><rect x="68" y="697" width="8" height="2" fill="#E8AC8C"/><rect x="76" y="697" width="2" height="2" fill="#C2C874"/><rect x="78" y="697" width="7" height="2" fill="#E8AC8C"/><rect x="31" y="700" width="2" height="2" fill="#C2C874"/><rect x="33" y="700" width="1" height="2" fill="#E8AC8C"/><rect x="34" y="700" width="2" height="2" fill="#C2C874"/><rect x="31" y="703" width="1" height="2" fill="#C2C874"/><rect x="32" y="703" width="1" height="2" fill="#E8AC8C"/><rect x="34" y="703" width="5" height="2" fill="#E8AC8C"/><rect x="39" y="703" width="9" height="2" fill="#9FC9B8"/><rect x="49" y="703" width="6" height="2" fill="#A6A8DC"/><rect x="55" y="703" width="1" height="2" fill="#C2C874"/><rect x="56" y="703" width="18" height="2" fill="#9FC9B8"/><rect x="74" y="703" width="1" height="2" fill="#C2C874"/><rect x="36" y="706" width="1" height="2" fill="#C2C874"/><rect x="37" y="706" width="3" height="2" fill="#E8AC8C"/><rect x="42" y="706" width="6" height="2" fill="#A6A8DC"/><rect x="48" y="706" width="1" height="2" fill="#C2C874"/><rect x="49" y="706" width="19" height="2" fill="#9FC9B8"/><rect x="68" y="706" width="1" height="2" fill="#C2C874"/><rect x="40" y="709" width="1" height="2" fill="#C2C874"/><rect x="41" y="709" width="4" height="2" fill="#E8AC8C"/><rect x="46" y="709" width="9" height="2" fill="#E8AC8C"/><rect x="55" y="709" width="3" height="2" fill="#9FC9B8"/><rect x="60" y="709" width="1" height="2" fill="#9FC9B8"/><rect x="62" y="709" width="2" height="2" fill="#9FC9B8"/><rect x="66" y="709" width="3" height="2" fill="#9FC9B8"/><rect x="69" y="709" width="1" height="2" fill="#C2C874"/><rect x="45" y="712" width="1" height="2" fill="#C2C874"/><rect x="46" y="712" width="5" height="2" fill="#E8AC8C"/><rect x="52" y="712" width="2" height="2" fill="#E8AC8C"/><rect x="54" y="712" width="1" height="2" fill="#C2C874"/><rect x="54" y="712" width="14" height="2" fill="#9FC9B8"/><rect x="69" y="712" width="1" height="2" fill="#9FC9B8"/><rect x="72" y="712" width="3" height="2" fill="#9FC9B8"/><rect x="76" y="712" width="9" height="2" fill="#9FC9B8"/><rect x="45" y="715" width="3" height="2" fill="#C2C874"/><rect x="48" y="715" width="4" height="2" fill="#E8AC8C"/><rect x="36" y="718" width="2" height="2" fill="#C2C874"/><rect x="38" y="718" width="5" height="2" fill="#E8AC8C"/><rect x="36" y="721" width="1" height="2" fill="#C2C874"/><rect x="37" y="721" width="5" height="2" fill="#E8AC8C"/><rect x="43" y="721" width="6" height="2" fill="#A6A8DC"/><rect x="49" y="721" width="1" height="2" fill="#C2C874"/><rect x="50" y="721" width="18" height="2" fill="#9FC9B8"/><rect x="68" y="721" width="7" height="2" fill="#E8AC8C"/><rect x="75" y="721" width="2" height="2" fill="#C2C874"/><rect x="77" y="721" width="6" height="2" fill="#E8AC8C"/><rect x="31" y="724" width="2" height="2" fill="#C2C874"/><rect x="33" y="724" width="1" height="2" fill="#E8AC8C"/><rect x="34" y="724" width="2" height="2" fill="#C2C874"/><rect x="26" y="730" width="2" height="2" fill="#C2C874"/><rect x="28" y="730" width="5" height="2" fill="#E8AC8C"/><rect x="26" y="733" width="1" height="2" fill="#C2C874"/><rect x="27" y="733" width="4" height="2" fill="#E8AC8C"/><rect x="32" y="733" width="6" height="2" fill="#A6A8DC"/><rect x="38" y="733" width="1" height="2" fill="#C2C874"/><rect x="39" y="733" width="17" height="2" fill="#9FC9B8"/><rect x="57" y="733" width="3" height="2" fill="#E8AC8C"/><rect x="60" y="733" width="6" height="2" fill="#9FC9B8"/><rect x="67" y="733" width="6" height="2" fill="#E8AC8C"/><rect x="73" y="733" width="1" height="2" fill="#C2C874"/><rect x="74" y="733" width="11" height="2" fill="#9FC9B8"/><rect x="31" y="736" width="1" height="2" fill="#C2C874"/><rect x="32" y="736" width="4" height="2" fill="#E8AC8C"/><rect x="37" y="736" width="6" height="2" fill="#A6A8DC"/><rect x="43" y="736" width="1" height="2" fill="#C2C874"/><rect x="44" y="736" width="13" height="2" fill="#9FC9B8"/><rect x="57" y="736" width="1" height="2" fill="#C2C874"/><rect x="36" y="739" width="1" height="2" fill="#C2C874"/><rect x="37" y="739" width="1" height="2" fill="#E8AC8C"/><rect x="39" y="739" width="5" height="2" fill="#E8AC8C"/><rect x="44" y="739" width="1" height="2" fill="#C2C874"/><rect x="45" y="739" width="37" height="2" fill="#9FC9B8"/><rect x="84" y="739" width="1" height="2" fill="#A6A8DC"/><rect x="40" y="742" width="1" height="2" fill="#C2C874"/><rect x="41" y="742" width="4" height="2" fill="#E8AC8C"/><rect x="46" y="742" width="6" height="2" fill="#A6A8DC"/><rect x="52" y="742" width="2" height="2" fill="#C2C874"/><rect x="54" y="742" width="18" height="2" fill="#9FC9B8"/><rect x="73" y="742" width="10" height="2" fill="#9FC9B8"/><rect x="83" y="742" width="1" height="2" fill="#C2C874"/><rect x="45" y="745" width="1" height="2" fill="#C2C874"/><rect x="46" y="745" width="5" height="2" fill="#E8AC8C"/><rect x="52" y="745" width="6" height="2" fill="#A6A8DC"/><rect x="58" y="745" width="2" height="2" fill="#C2C874"/><rect x="60" y="745" width="10" height="2" fill="#9FC9B8"/><rect x="70" y="745" width="2" height="2" fill="#C2C874"/><rect x="72" y="745" width="3" height="2" fill="#E8AC8C"/><rect x="75" y="745" width="3" height="2" fill="#C2C874"/><rect x="78" y="745" width="4" height="2" fill="#E8AC8C"/><rect x="82" y="745" width="2" height="2" fill="#C2C874"/><rect x="40" y="748" width="3" height="2" fill="#C2C874"/><rect x="43" y="748" width="3" height="2" fill="#E8AC8C"/><rect x="46" y="748" width="2" height="2" fill="#C2C874"/><rect x="40" y="751" width="1" height="2" fill="#C2C874"/><rect x="41" y="751" width="3" height="2" fill="#E8AC8C"/><rect x="45" y="751" width="6" height="2" fill="#A6A8DC"/><rect x="51" y="751" width="1" height="2" fill="#C2C874"/><rect x="52" y="751" width="21" height="2" fill="#9FC9B8"/><rect x="73" y="751" width="9" height="2" fill="#E8AC8C"/><rect x="82" y="751" width="1" height="2" fill="#C2C874"/><rect x="83" y="751" width="2" height="2" fill="#E8AC8C"/><rect x="40" y="754" width="1" height="2" fill="#C2C874"/><rect x="41" y="754" width="2" height="2" fill="#E8AC8C"/><rect x="44" y="754" width="6" height="2" fill="#A6A8DC"/><rect x="50" y="754" width="1" height="2" fill="#C2C874"/><rect x="51" y="754" width="19" height="2" fill="#9FC9B8"/><rect x="70" y="754" width="2" height="2" fill="#C2C874"/><rect x="72" y="754" width="1" height="2" fill="#EBA2D0"/><rect x="73" y="754" width="8" height="2" fill="#E8AC8C"/><rect x="81" y="754" width="3" height="2" fill="#C2C874"/><rect x="84" y="754" width="1" height="2" fill="#E8AC8C"/><rect x="36" y="757" width="2" height="2" fill="#C2C874"/><rect x="38" y="757" width="2" height="2" fill="#E8AC8C"/><rect x="36" y="760" width="1" height="2" fill="#C2C874"/><rect x="37" y="760" width="1" height="2" fill="#E8AC8C"/><rect x="39" y="760" width="5" height="2" fill="#E8AC8C"/><rect x="44" y="760" width="1" height="2" fill="#C2C874"/><rect x="45" y="760" width="37" height="2" fill="#9FC9B8"/><rect x="84" y="760" width="1" height="2" fill="#A6A8DC"/><rect x="40" y="763" width="1" height="2" fill="#C2C874"/><rect x="41" y="763" width="4" height="2" fill="#E8AC8C"/><rect x="46" y="763" width="6" height="2" fill="#A6A8DC"/><rect x="52" y="763" width="2" height="2" fill="#C2C874"/><rect x="54" y="763" width="18" height="2" fill="#9FC9B8"/><rect x="73" y="763" width="10" height="2" fill="#9FC9B8"/><rect x="83" y="763" width="1" height="2" fill="#C2C874"/><rect x="45" y="766" width="1" height="2" fill="#C2C874"/><rect x="46" y="766" width="5" height="2" fill="#E8AC8C"/><rect x="52" y="766" width="6" height="2" fill="#A6A8DC"/><rect x="58" y="766" width="2" height="2" fill="#C2C874"/><rect x="60" y="766" width="10" height="2" fill="#9FC9B8"/><rect x="70" y="766" width="2" height="2" fill="#C2C874"/><rect x="72" y="766" width="3" height="2" fill="#E8AC8C"/><rect x="75" y="766" width="3" height="2" fill="#C2C874"/><rect x="78" y="766" width="4" height="2" fill="#E8AC8C"/><rect x="82" y="766" width="2" height="2" fill="#C2C874"/><rect x="40" y="769" width="3" height="2" fill="#C2C874"/><rect x="43" y="769" width="3" height="2" fill="#E8AC8C"/><rect x="46" y="769" width="2" height="2" fill="#C2C874"/><rect x="40" y="772" width="1" height="2" fill="#C2C874"/><rect x="41" y="772" width="3" height="2" fill="#E8AC8C"/><rect x="45" y="772" width="6" height="2" fill="#A6A8DC"/><rect x="51" y="772" width="1" height="2" fill="#C2C874"/><rect x="52" y="772" width="21" height="2" fill="#9FC9B8"/><rect x="73" y="772" width="9" height="2" fill="#E8AC8C"/><rect x="82" y="772" width="1" height="2" fill="#C2C874"/><rect x="83" y="772" width="2" height="2" fill="#E8AC8C"/><rect x="40" y="775" width="1" height="2" fill="#C2C874"/><rect x="41" y="775" width="2" height="2" fill="#E8AC8C"/><rect x="44" y="775" width="6" height="2" fill="#A6A8DC"/><rect x="50" y="775" width="1" height="2" fill="#C2C874"/><rect x="51" y="775" width="19" height="2" fill="#9FC9B8"/><rect x="70" y="775" width="2" height="2" fill="#C2C874"/><rect x="72" y="775" width="1" height="2" fill="#EBA2D0"/><rect x="73" y="775" width="8" height="2" fill="#E8AC8C"/><rect x="81" y="775" width="3" height="2" fill="#C2C874"/><rect x="84" y="775" width="1" height="2" fill="#E8AC8C"/><rect x="36" y="778" width="2" height="2" fill="#C2C874"/><rect x="38" y="778" width="2" height="2" fill="#E8AC8C"/><rect x="36" y="781" width="1" height="2" fill="#C2C874"/><rect x="37" y="781" width="1" height="2" fill="#E8AC8C"/><rect x="39" y="781" width="5" height="2" fill="#E8AC8C"/><rect x="44" y="781" width="1" height="2" fill="#C2C874"/><rect x="45" y="781" width="39" height="2" fill="#9FC9B8"/><rect x="40" y="784" width="1" height="2" fill="#C2C874"/><rect x="41" y="784" width="4" height="2" fill="#E8AC8C"/><rect x="46" y="784" width="6" height="2" fill="#A6A8DC"/><rect x="52" y="784" width="2" height="2" fill="#C2C874"/><rect x="54" y="784" width="18" height="2" fill="#9FC9B8"/><rect x="73" y="784" width="10" height="2" fill="#9FC9B8"/><rect x="83" y="784" width="1" height="2" fill="#C2C874"/><rect x="45" y="787" width="1" height="2" fill="#C2C874"/><rect x="46" y="787" width="5" height="2" fill="#E8AC8C"/><rect x="52" y="787" width="6" height="2" fill="#A6A8DC"/><rect x="58" y="787" width="2" height="2" fill="#C2C874"/><rect x="60" y="787" width="10" height="2" fill="#9FC9B8"/><rect x="70" y="787" width="2" height="2" fill="#C2C874"/><rect x="72" y="787" width="3" height="2" fill="#E8AC8C"/><rect x="75" y="787" width="3" height="2" fill="#C2C874"/><rect x="78" y="787" width="4" height="2" fill="#E8AC8C"/><rect x="82" y="787" width="2" height="2" fill="#C2C874"/><rect x="40" y="790" width="3" height="2" fill="#C2C874"/><rect x="43" y="790" width="3" height="2" fill="#E8AC8C"/><rect x="46" y="790" width="2" height="2" fill="#C2C874"/><rect x="40" y="793" width="1" height="2" fill="#C2C874"/><rect x="41" y="793" width="3" height="2" fill="#E8AC8C"/><rect x="45" y="793" width="6" height="2" fill="#A6A8DC"/><rect x="51" y="793" width="1" height="2" fill="#C2C874"/><rect x="52" y="793" width="21" height="2" fill="#9FC9B8"/><rect x="73" y="793" width="9" height="2" fill="#E8AC8C"/><rect x="82" y="793" width="1" height="2" fill="#C2C874"/><rect x="83" y="793" width="2" height="2" fill="#E8AC8C"/><rect x="40" y="796" width="1" height="2" fill="#C2C874"/><rect x="41" y="796" width="2" height="2" fill="#E8AC8C"/><rect x="44" y="796" width="6" height="2" fill="#A6A8DC"/><rect x="50" y="796" width="1" height="2" fill="#C2C874"/><rect x="51" y="796" width="19" height="2" fill="#9FC9B8"/><rect x="70" y="796" width="2" height="2" fill="#C2C874"/><rect x="72" y="796" width="1" height="2" fill="#EBA2D0"/><rect x="73" y="796" width="8" height="2" fill="#E8AC8C"/><rect x="81" y="796" width="3" height="2" fill="#C2C874"/><rect x="84" y="796" width="1" height="2" fill="#E8AC8C"/><rect x="36" y="799" width="2" height="2" fill="#C2C874"/><rect x="38" y="799" width="2" height="2" fill="#E8AC8C"/><rect x="36" y="802" width="1" height="2" fill="#C2C874"/><rect x="37" y="802" width="1" height="2" fill="#E8AC8C"/><rect x="39" y="802" width="5" height="2" fill="#E8AC8C"/><rect x="44" y="802" width="1" height="2" fill="#C2C874"/><rect x="45" y="802" width="39" height="2" fill="#9FC9B8"/><rect x="40" y="805" width="1" height="2" fill="#C2C874"/><rect x="41" y="805" width="4" height="2" fill="#E8AC8C"/><rect x="46" y="805" width="6" height="2" fill="#A6A8DC"/><rect x="52" y="805" width="2" height="2" fill="#C2C874"/><rect x="54" y="805" width="18" height="2" fill="#9FC9B8"/><rect x="73" y="805" width="10" height="2" fill="#9FC9B8"/><rect x="83" y="805" width="1" height="2" fill="#C2C874"/><rect x="45" y="808" width="1" height="2" fill="#C2C874"/><rect x="46" y="808" width="5" height="2" fill="#E8AC8C"/><rect x="52" y="808" width="6" height="2" fill="#A6A8DC"/><rect x="58" y="808" width="2" height="2" fill="#C2C874"/><rect x="60" y="808" width="10" height="2" fill="#9FC9B8"/><rect x="70" y="808" width="2" height="2" fill="#C2C874"/><rect x="72" y="808" width="3" height="2" fill="#E8AC8C"/><rect x="75" y="808" width="3" height="2" fill="#C2C874"/><rect x="78" y="808" width="4" height="2" fill="#E8AC8C"/><rect x="82" y="808" width="2" height="2" fill="#C2C874"/><rect x="40" y="811" width="3" height="2" fill="#C2C874"/><rect x="43" y="811" width="3" height="2" fill="#E8AC8C"/><rect x="46" y="811" width="2" height="2" fill="#C2C874"/><rect x="40" y="814" width="1" height="2" fill="#C2C874"/><rect x="41" y="814" width="3" height="2" fill="#E8AC8C"/><rect x="45" y="814" width="6" height="2" fill="#A6A8DC"/><rect x="51" y="814" width="1" height="2" fill="#C2C874"/><rect x="52" y="814" width="21" height="2" fill="#9FC9B8"/><rect x="73" y="814" width="9" height="2" fill="#E8AC8C"/><rect x="82" y="814" width="1" height="2" fill="#C2C874"/><rect x="83" y="814" width="2" height="2" fill="#E8AC8C"/><rect x="40" y="817" width="1" height="2" fill="#C2C874"/><rect x="41" y="817" width="2" height="2" fill="#E8AC8C"/><rect x="44" y="817" width="6" height="2" fill="#A6A8DC"/><rect x="50" y="817" width="1" height="2" fill="#C2C874"/><rect x="51" y="817" width="19" height="2" fill="#9FC9B8"/><rect x="70" y="817" width="2" height="2" fill="#C2C874"/><rect x="72" y="817" width="1" height="2" fill="#EBA2D0"/><rect x="73" y="817" width="8" height="2" fill="#E8AC8C"/><rect x="81" y="817" width="3" height="2" fill="#C2C874"/><rect x="84" y="817" width="1" height="2" fill="#E8AC8C"/><rect x="36" y="820" width="2" height="2" fill="#C2C874"/><rect x="38" y="820" width="2" height="2" fill="#E8AC8C"/><rect x="36" y="823" width="1" height="2" fill="#C2C874"/><rect x="37" y="823" width="1" height="2" fill="#E8AC8C"/><rect x="39" y="823" width="5" height="2" fill="#E8AC8C"/><rect x="44" y="823" width="1" height="2" fill="#C2C874"/><rect x="45" y="823" width="37" height="2" fill="#9FC9B8"/><rect x="84" y="823" width="1" height="2" fill="#A6A8DC"/><rect x="40" y="826" width="1" height="2" fill="#C2C874"/><rect x="41" y="826" width="4" height="2" fill="#E8AC8C"/><rect x="46" y="826" width="6" height="2" fill="#A6A8DC"/><rect x="52" y="826" width="2" height="2" fill="#C2C874"/><rect x="54" y="826" width="18" height="2" fill="#9FC9B8"/><rect x="73" y="826" width="10" height="2" fill="#9FC9B8"/><rect x="83" y="826" width="1" height="2" fill="#C2C874"/><rect x="45" y="829" width="1" height="2" fill="#C2C874"/><rect x="46" y="829" width="5" height="2" fill="#E8AC8C"/><rect x="52" y="829" width="6" height="2" fill="#A6A8DC"/><rect x="58" y="829" width="2" height="2" fill="#C2C874"/><rect x="60" y="829" width="10" height="2" fill="#9FC9B8"/><rect x="70" y="829" width="2" height="2" fill="#C2C874"/><rect x="72" y="829" width="3" height="2" fill="#E8AC8C"/><rect x="75" y="829" width="3" height="2" fill="#C2C874"/><rect x="78" y="829" width="4" height="2" fill="#E8AC8C"/><rect x="82" y="829" width="2" height="2" fill="#C2C874"/><rect x="40" y="832" width="3" height="2" fill="#C2C874"/><rect x="43" y="832" width="3" height="2" fill="#E8AC8C"/><rect x="46" y="832" width="2" height="2" fill="#C2C874"/><rect x="40" y="835" width="1" height="2" fill="#C2C874"/><rect x="41" y="835" width="3" height="2" fill="#E8AC8C"/><rect x="45" y="835" width="6" height="2" fill="#A6A8DC"/><rect x="51" y="835" width="1" height="2" fill="#C2C874"/><rect x="52" y="835" width="21" height="2" fill="#9FC9B8"/><rect x="73" y="835" width="9" height="2" fill="#E8AC8C"/><rect x="82" y="835" width="1" height="2" fill="#C2C874"/><rect x="83" y="835" width="2" height="2" fill="#E8AC8C"/><rect x="40" y="838" width="1" height="2" fill="#C2C874"/><rect x="41" y="838" width="2" height="2" fill="#E8AC8C"/><rect x="44" y="838" width="6" height="2" fill="#A6A8DC"/><rect x="50" y="838" width="1" height="2" fill="#C2C874"/><rect x="51" y="838" width="19" height="2" fill="#9FC9B8"/><rect x="70" y="838" width="2" height="2" fill="#C2C874"/><rect x="72" y="838" width="1" height="2" fill="#EBA2D0"/><rect x="73" y="838" width="8" height="2" fill="#E8AC8C"/><rect x="81" y="838" width="3" height="2" fill="#C2C874"/><rect x="84" y="838" width="1" height="2" fill="#E8AC8C"/><rect x="36" y="841" width="2" height="2" fill="#C2C874"/><rect x="38" y="841" width="2" height="2" fill="#E8AC8C"/><rect x="36" y="844" width="1" height="2" fill="#C2C874"/><rect x="37" y="844" width="1" height="2" fill="#E8AC8C"/><rect x="39" y="844" width="5" height="2" fill="#E8AC8C"/><rect x="44" y="844" width="1" height="2" fill="#C2C874"/><rect x="45" y="844" width="37" height="2" fill="#9FC9B8"/><rect x="84" y="844" width="1" height="2" fill="#A6A8DC"/><rect x="40" y="847" width="1" height="2" fill="#C2C874"/><rect x="41" y="847" width="4" height="2" fill="#E8AC8C"/><rect x="46" y="847" width="6" height="2" fill="#A6A8DC"/><rect x="52" y="847" width="2" height="2" fill="#C2C874"/><rect x="54" y="847" width="18" height="2" fill="#9FC9B8"/><rect x="73" y="847" width="10" height="2" fill="#9FC9B8"/><rect x="83" y="847" width="1" height="2" fill="#C2C874"/><rect x="45" y="850" width="1" height="2" fill="#C2C874"/><rect x="46" y="850" width="5" height="2" fill="#E8AC8C"/><rect x="52" y="850" width="6" height="2" fill="#A6A8DC"/><rect x="58" y="850" width="2" height="2" fill="#C2C874"/><rect x="60" y="850" width="10" height="2" fill="#9FC9B8"/><rect x="70" y="850" width="2" height="2" fill="#C2C874"/><rect x="72" y="850" width="3" height="2" fill="#E8AC8C"/><rect x="75" y="850" width="3" height="2" fill="#C2C874"/><rect x="78" y="850" width="4" height="2" fill="#E8AC8C"/><rect x="82" y="850" width="2" height="2" fill="#C2C874"/><rect x="40" y="853" width="3" height="2" fill="#C2C874"/><rect x="43" y="853" width="3" height="2" fill="#E8AC8C"/><rect x="46" y="853" width="2" height="2" fill="#C2C874"/><rect x="40" y="856" width="1" height="2" fill="#C2C874"/><rect x="41" y="856" width="3" height="2" fill="#E8AC8C"/><rect x="45" y="856" width="6" height="2" fill="#A6A8DC"/><rect x="51" y="856" width="1" height="2" fill="#C2C874"/><rect x="52" y="856" width="21" height="2" fill="#9FC9B8"/><rect x="73" y="856" width="9" height="2" fill="#E8AC8C"/><rect x="82" y="856" width="1" height="2" fill="#C2C874"/><rect x="83" y="856" width="2" height="2" fill="#E8AC8C"/><rect x="40" y="859" width="1" height="2" fill="#C2C874"/><rect x="41" y="859" width="2" height="2" fill="#E8AC8C"/><rect x="44" y="859" width="6" height="2" fill="#A6A8DC"/><rect x="50" y="859" width="1" height="2" fill="#C2C874"/><rect x="51" y="859" width="19" height="2" fill="#9FC9B8"/><rect x="70" y="859" width="2" height="2" fill="#C2C874"/><rect x="72" y="859" width="1" height="2" fill="#EBA2D0"/><rect x="73" y="859" width="8" height="2" fill="#E8AC8C"/><rect x="81" y="859" width="3" height="2" fill="#C2C874"/><rect x="84" y="859" width="1" height="2" fill="#E8AC8C"/><rect x="36" y="862" width="2" height="2" fill="#C2C874"/><rect x="38" y="862" width="2" height="2" fill="#E8AC8C"/><rect x="36" y="865" width="1" height="2" fill="#C2C874"/><rect x="37" y="865" width="1" height="2" fill="#E8AC8C"/><rect x="39" y="865" width="5" height="2" fill="#E8AC8C"/><rect x="44" y="865" width="1" height="2" fill="#C2C874"/><rect x="45" y="865" width="37" height="2" fill="#9FC9B8"/><rect x="84" y="865" width="1" height="2" fill="#A6A8DC"/><rect x="40" y="868" width="1" height="2" fill="#C2C874"/><rect x="41" y="868" width="4" height="2" fill="#E8AC8C"/><rect x="46" y="868" width="6" height="2" fill="#A6A8DC"/><rect x="52" y="868" width="2" height="2" fill="#C2C874"/><rect x="54" y="868" width="18" height="2" fill="#9FC9B8"/><rect x="73" y="868" width="10" height="2" fill="#9FC9B8"/><rect x="83" y="868" width="1" height="2" fill="#C2C874"/><rect x="45" y="871" width="1" height="2" fill="#C2C874"/><rect x="46" y="871" width="5" height="2" fill="#E8AC8C"/><rect x="52" y="871" width="6" height="2" fill="#A6A8DC"/><rect x="58" y="871" width="2" height="2" fill="#C2C874"/><rect x="60" y="871" width="10" height="2" fill="#9FC9B8"/><rect x="70" y="871" width="2" height="2" fill="#C2C874"/><rect x="72" y="871" width="3" height="2" fill="#E8AC8C"/><rect x="75" y="871" width="3" height="2" fill="#C2C874"/><rect x="78" y="871" width="4" height="2" fill="#E8AC8C"/><rect x="82" y="871" width="2" height="2" fill="#C2C874"/><rect x="40" y="874" width="3" height="2" fill="#C2C874"/><rect x="43" y="874" width="3" height="2" fill="#E8AC8C"/><rect x="46" y="874" width="2" height="2" fill="#C2C874"/><rect x="40" y="877" width="1" height="2" fill="#C2C874"/><rect x="41" y="877" width="3" height="2" fill="#E8AC8C"/><rect x="45" y="877" width="6" height="2" fill="#A6A8DC"/><rect x="51" y="877" width="1" height="2" fill="#C2C874"/><rect x="52" y="877" width="21" height="2" fill="#9FC9B8"/><rect x="73" y="877" width="9" height="2" fill="#E8AC8C"/><rect x="82" y="877" width="1" height="2" fill="#C2C874"/><rect x="83" y="877" width="2" height="2" fill="#E8AC8C"/><rect x="40" y="880" width="1" height="2" fill="#C2C874"/><rect x="41" y="880" width="2" height="2" fill="#E8AC8C"/><rect x="44" y="880" width="6" height="2" fill="#A6A8DC"/><rect x="50" y="880" width="1" height="2" fill="#C2C874"/><rect x="51" y="880" width="19" height="2" fill="#9FC9B8"/><rect x="70" y="880" width="2" height="2" fill="#C2C874"/><rect x="72" y="880" width="1" height="2" fill="#EBA2D0"/><rect x="73" y="880" width="8" height="2" fill="#E8AC8C"/><rect x="81" y="880" width="3" height="2" fill="#C2C874"/><rect x="84" y="880" width="1" height="2" fill="#E8AC8C"/><rect x="36" y="883" width="2" height="2" fill="#C2C874"/><rect x="38" y="883" width="2" height="2" fill="#E8AC8C"/><rect x="36" y="886" width="1" height="2" fill="#C2C874"/><rect x="37" y="886" width="1" height="2" fill="#E8AC8C"/><rect x="39" y="886" width="5" height="2" fill="#E8AC8C"/><rect x="44" y="886" width="1" height="2" fill="#C2C874"/><rect x="45" y="886" width="37" height="2" fill="#9FC9B8"/><rect x="84" y="886" width="1" height="2" fill="#A6A8DC"/><rect x="40" y="889" width="1" height="2" fill="#C2C874"/><rect x="41" y="889" width="4" height="2" fill="#E8AC8C"/><rect x="46" y="889" width="6" height="2" fill="#A6A8DC"/><rect x="52" y="889" width="2" height="2" fill="#C2C874"/><rect x="54" y="889" width="18" height="2" fill="#9FC9B8"/><rect x="73" y="889" width="10" height="2" fill="#9FC9B8"/><rect x="83" y="889" width="1" height="2" fill="#C2C874"/><rect x="45" y="892" width="1" height="2" fill="#C2C874"/><rect x="46" y="892" width="5" height="2" fill="#E8AC8C"/><rect x="52" y="892" width="6" height="2" fill="#A6A8DC"/><rect x="58" y="892" width="2" height="2" fill="#C2C874"/><rect x="60" y="892" width="10" height="2" fill="#9FC9B8"/><rect x="70" y="892" width="2" height="2" fill="#C2C874"/><rect x="72" y="892" width="3" height="2" fill="#E8AC8C"/><rect x="75" y="892" width="3" height="2" fill="#C2C874"/><rect x="78" y="892" width="4" height="2" fill="#E8AC8C"/><rect x="82" y="892" width="2" height="2" fill="#C2C874"/><rect x="40" y="895" width="3" height="2" fill="#C2C874"/><rect x="43" y="895" width="3" height="2" fill="#E8AC8C"/><rect x="46" y="895" width="2" height="2" fill="#C2C874"/><rect x="40" y="898" width="1" height="2" fill="#C2C874"/><rect x="41" y="898" width="3" height="2" fill="#E8AC8C"/><rect x="45" y="898" width="6" height="2" fill="#A6A8DC"/><rect x="51" y="898" width="1" height="2" fill="#C2C874"/><rect x="52" y="898" width="21" height="2" fill="#9FC9B8"/><rect x="73" y="898" width="9" height="2" fill="#E8AC8C"/><rect x="82" y="898" width="1" height="2" fill="#C2C874"/><rect x="83" y="898" width="2" height="2" fill="#E8AC8C"/><rect x="40" y="901" width="1" height="2" fill="#C2C874"/><rect x="41" y="901" width="2" height="2" fill="#E8AC8C"/><rect x="44" y="901" width="6" height="2" fill="#A6A8DC"/><rect x="50" y="901" width="1" height="2" fill="#C2C874"/><rect x="51" y="901" width="19" height="2" fill="#9FC9B8"/><rect x="70" y="901" width="2" height="2" fill="#C2C874"/><rect x="72" y="901" width="1" height="2" fill="#EBA2D0"/><rect x="73" y="901" width="8" height="2" fill="#E8AC8C"/><rect x="81" y="901" width="3" height="2" fill="#C2C874"/><rect x="84" y="901" width="1" height="2" fill="#E8AC8C"/><rect x="36" y="904" width="2" height="2" fill="#C2C874"/><rect x="38" y="904" width="2" height="2" fill="#E8AC8C"/><rect x="36" y="907" width="1" height="2" fill="#C2C874"/><rect x="37" y="907" width="1" height="2" fill="#E8AC8C"/><rect x="39" y="907" width="5" height="2" fill="#E8AC8C"/><rect x="44" y="907" width="1" height="2" fill="#C2C874"/><rect x="45" y="907" width="37" height="2" fill="#9FC9B8"/><rect x="84" y="907" width="1" height="2" fill="#A6A8DC"/><rect x="40" y="910" width="1" height="2" fill="#C2C874"/><rect x="41" y="910" width="4" height="2" fill="#E8AC8C"/><rect x="46" y="910" width="6" height="2" fill="#A6A8DC"/><rect x="52" y="910" width="2" height="2" fill="#C2C874"/><rect x="54" y="910" width="18" height="2" fill="#9FC9B8"/><rect x="73" y="910" width="10" height="2" fill="#9FC9B8"/><rect x="83" y="910" width="1" height="2" fill="#C2C874"/><rect x="45" y="913" width="1" height="2" fill="#C2C874"/><rect x="46" y="913" width="5" height="2" fill="#E8AC8C"/><rect x="52" y="913" width="6" height="2" fill="#A6A8DC"/><rect x="58" y="913" width="2" height="2" fill="#C2C874"/><rect x="60" y="913" width="10" height="2" fill="#9FC9B8"/><rect x="70" y="913" width="2" height="2" fill="#C2C874"/><rect x="72" y="913" width="3" height="2" fill="#E8AC8C"/><rect x="75" y="913" width="3" height="2" fill="#C2C874"/><rect x="78" y="913" width="4" height="2" fill="#E8AC8C"/><rect x="82" y="913" width="2" height="2" fill="#C2C874"/><rect x="40" y="916" width="3" height="2" fill="#C2C874"/><rect x="43" y="916" width="3" height="2" fill="#E8AC8C"/><rect x="46" y="916" width="2" height="2" fill="#C2C874"/><rect x="40" y="919" width="1" height="2" fill="#C2C874"/><rect x="41" y="919" width="3" height="2" fill="#E8AC8C"/><rect x="45" y="919" width="6" height="2" fill="#A6A8DC"/><rect x="51" y="919" width="1" height="2" fill="#C2C874"/><rect x="52" y="919" width="21" height="2" fill="#9FC9B8"/><rect x="73" y="919" width="9" height="2" fill="#E8AC8C"/><rect x="82" y="919" width="1" height="2" fill="#C2C874"/><rect x="83" y="919" width="2" height="2" fill="#E8AC8C"/><rect x="40" y="922" width="1" height="2" fill="#C2C874"/><rect x="41" y="922" width="2" height="2" fill="#E8AC8C"/><rect x="44" y="922" width="6" height="2" fill="#A6A8DC"/><rect x="50" y="922" width="1" height="2" fill="#C2C874"/><rect x="51" y="922" width="19" height="2" fill="#9FC9B8"/><rect x="70" y="922" width="2" height="2" fill="#C2C874"/><rect x="72" y="922" width="1" height="2" fill="#EBA2D0"/><rect x="73" y="922" width="8" height="2" fill="#E8AC8C"/><rect x="81" y="922" width="3" height="2" fill="#C2C874"/><rect x="84" y="922" width="1" height="2" fill="#E8AC8C"/><rect x="36" y="925" width="2" height="2" fill="#C2C874"/><rect x="38" y="925" width="2" height="2" fill="#E8AC8C"/><rect x="36" y="928" width="1" height="2" fill="#C2C874"/><rect x="37" y="928" width="1" height="2" fill="#E8AC8C"/><rect x="39" y="928" width="5" height="2" fill="#E8AC8C"/><rect x="44" y="928" width="1" height="2" fill="#C2C874"/><rect x="45" y="928" width="37" height="2" fill="#9FC9B8"/><rect x="84" y="928" width="1" height="2" fill="#A6A8DC"/><rect x="40" y="931" width="1" height="2" fill="#C2C874"/><rect x="41" y="931" width="4" height="2" fill="#E8AC8C"/><rect x="46" y="931" width="6" height="2" fill="#A6A8DC"/><rect x="52" y="931" width="2" height="2" fill="#C2C874"/><rect x="54" y="931" width="18" height="2" fill="#9FC9B8"/><rect x="73" y="931" width="10" height="2" fill="#9FC9B8"/><rect x="83" y="931" width="1" height="2" fill="#C2C874"/><rect x="45" y="934" width="1" height="2" fill="#C2C874"/><rect x="46" y="934" width="5" height="2" fill="#E8AC8C"/><rect x="52" y="934" width="6" height="2" fill="#A6A8DC"/><rect x="58" y="934" width="2" height="2" fill="#C2C874"/><rect x="60" y="934" width="10" height="2" fill="#9FC9B8"/><rect x="70" y="934" width="2" height="2" fill="#C2C874"/><rect x="72" y="934" width="3" height="2" fill="#E8AC8C"/><rect x="75" y="934" width="3" height="2" fill="#C2C874"/><rect x="78" y="934" width="4" height="2" fill="#E8AC8C"/><rect x="82" y="934" width="2" height="2" fill="#C2C874"/></svg>
</body></html>
